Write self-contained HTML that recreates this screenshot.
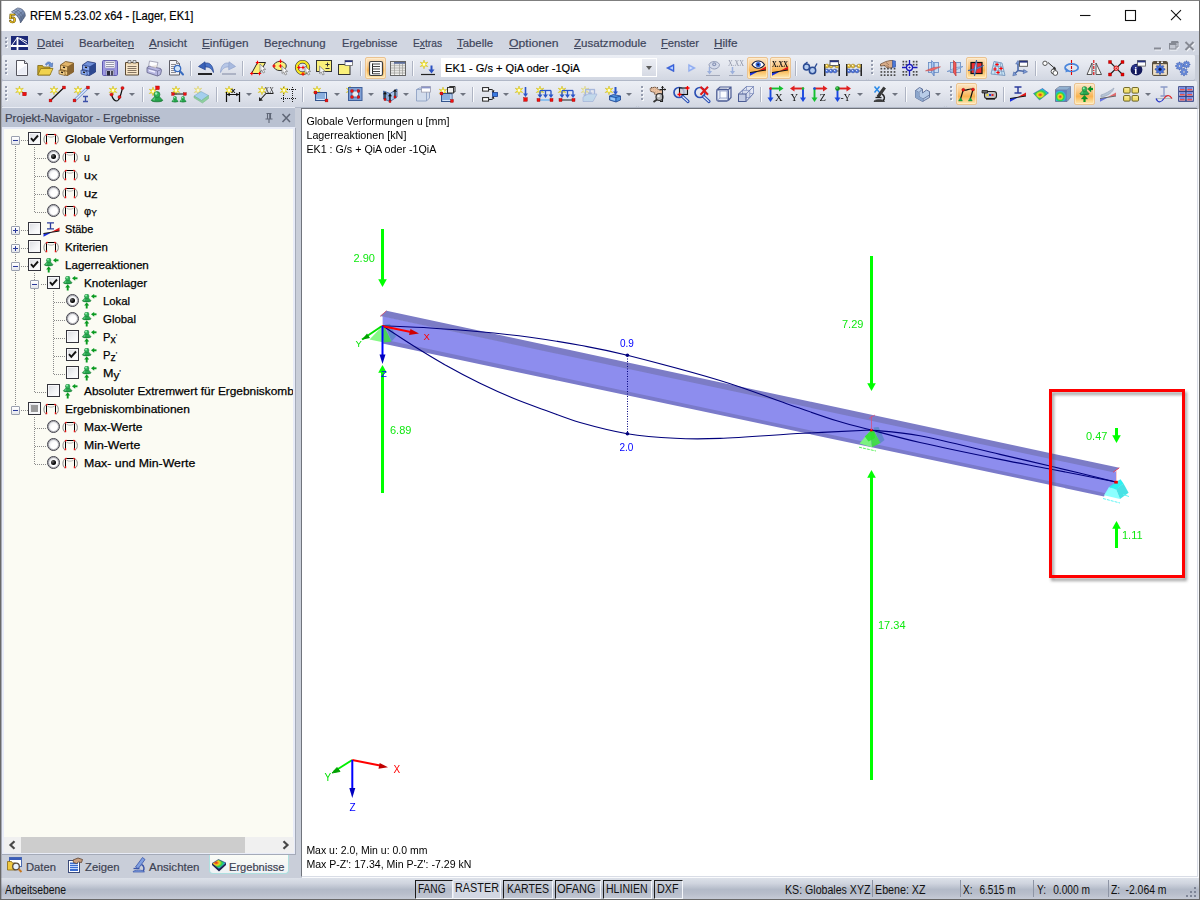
<!DOCTYPE html>
<html lang="de">
<head>
<meta charset="utf-8">
<title>RFEM 5.23.02 x64 - [Lager, EK1]</title>
<style>
*{box-sizing:border-box;margin:0;padding:0}
html,body{width:1200px;height:900px;overflow:hidden;background:#fff}
body{position:relative;font-family:"Liberation Sans",sans-serif;font-size:12px;color:#000}
.abs{position:absolute}
#win{position:absolute;left:0;top:0;width:1200px;height:900px;background:#c9ced9;overflow:hidden}
#frame{position:absolute;left:0;top:0;width:1200px;height:900px;border:1px solid #686868;border-top-color:#7f7f7f;z-index:50;pointer-events:none;box-shadow:inset 1px 0 0 rgba(80,80,88,.28)}
#title{position:absolute;left:1px;top:1px;width:1198px;height:30px;background:#fff}
.sx{display:inline-block;transform-origin:0 50%;white-space:nowrap}
#title .t{-webkit-text-stroke:.2px #000;position:absolute;left:29px;top:7.800px;font-size:12.200px;color:#000}
#menu{position:absolute;left:1px;top:31px;width:1198px;height:24px;background:#d1d6e1}
#menu span{-webkit-text-stroke:.2px #3e455b;position:absolute;top:5px;font-size:11.800px;color:#3e455b;white-space:nowrap;transform-origin:0 50%}
#menu u{text-decoration:underline;text-underline-offset:.5px;text-decoration-thickness:1px}
.tb{position:absolute;border-radius:2px;background:linear-gradient(#eceff5 0%,#e4e7ef 40%,#d2d7e2 100%);box-shadow:0 1px 0 #b1b8c7}
.grip{position:absolute;width:3px;height:16px}
.grip::after{content:"";position:absolute;left:1px;top:1px;width:2px;height:15px;background:repeating-linear-gradient(#f6f8fb 0 2px,transparent 2px 4px)}
.grip::before{content:"";position:absolute;left:0;top:0;width:2px;height:15px;background:repeating-linear-gradient(#949bad 0 2px,transparent 2px 4px);z-index:1}
.sep{position:absolute;width:2px;height:15px;border-left:1px solid #aeb4c3;border-right:1px solid #fafbfd}
.dd{position:absolute;width:0;height:0;border-left:3px solid transparent;border-right:3px solid transparent;border-top:3px solid #6f7480}
.hot{position:absolute;height:22px;border:1px solid #eac391;border-radius:2px;background:linear-gradient(#fce6c6 0%,#fbcb8c 35%,#f9b350 62%,#fcd68c 85%,#fee9b8 100%);box-shadow:inset 0 0 0 1px rgba(255,240,210,.55)}
.ic{position:absolute;width:16px;height:16px;overflow:visible;will-change:transform}
#phead{position:absolute;left:2px;top:107px;width:293px;height:21px;background:#b9c1d1;border-top:1px solid #e9ecf4}
#phead .t{-webkit-text-stroke:.2px #3d4252;position:absolute;left:3px;top:2.500px;font-size:11.800px;color:#3d4252;white-space:nowrap;transform-origin:0 50%}
#tree{position:absolute;left:2px;top:127px;width:293px;height:727px;background:#fbfbf3;border:2px solid #e8ecf8;border-bottom:0;overflow:hidden}
#titems{position:absolute;left:0;top:0;width:293px;height:860px;overflow:hidden}
#titems .tx{-webkit-text-stroke:.25px #000;position:absolute;font-size:11.800px;white-space:nowrap;transform-origin:0 50%;transform:scaleX(.93);line-height:14px}
#titems .tx em{font-style:normal;font-size:11px;position:relative;top:1.500px}
#titems .tx b{font-weight:normal;font-size:8px;position:relative;top:-2px;color:#456}
#titems .tx small{font-size:9px;position:relative;top:1px;letter-spacing:0}
#view{position:absolute;left:301px;top:108px;width:897px;height:769px;background:#fff;border:1px solid #70747c;border-right-color:#d9dde6;border-bottom-color:#d9dde6;box-shadow:1px 1px 0 #fafbfd}
#status{position:absolute;left:1px;top:878px;width:1198px;height:21px;background:linear-gradient(#dde1e9 0%,#d0d5df 25%,#b3bac8 55%,#b8becb 75%,#c6cbd6 100%)}
#status span{position:absolute;top:4.500px;font-size:12px;white-space:nowrap;color:#111;transform-origin:0 50%}
.cb{position:absolute;width:13px;height:13px;border:1px solid #34343c;background:linear-gradient(135deg,#d9dbe0,#f4f5f7 60%,#fff);box-shadow:inset 0 0 0 1px #f7f7f9}
.rb{position:absolute;width:13px;height:13px;border:1px solid #40404a;border-radius:50%;background:radial-gradient(circle at 62% 62%,#fff 35%,#cfd1d8 100%);box-shadow:inset 0 0 0 1px rgba(90,90,100,.45)}
.rb.on::after{content:"";position:absolute;left:3px;top:3px;width:5px;height:5px;border-radius:50%;background:radial-gradient(circle at 35% 35%,#666,#000 60%)}
.ex{position:absolute;width:9px;height:9px;border:1px solid #9aa0ae;border-radius:1px;background:linear-gradient(#fff,#e4e6ec)}
.ex::before{content:"";position:absolute;left:1px;top:3px;width:5px;height:1px;background:#2a3a9a}
.ex.pl::after{content:"";position:absolute;left:3px;top:1px;width:1px;height:5px;background:#2a3a9a}
.hd{position:absolute;height:1px;background:repeating-linear-gradient(90deg,#8a8a8a 0 1px,transparent 1px 2px)}
.vd{position:absolute;width:1px;background:repeating-linear-gradient(#8a8a8a 0 1px,transparent 1px 2px)}
</style>
</head>
<body>
<div id="win">
 <div id="title"><span class="t sx" style="transform:scaleX(.91)">RFEM 5.23.02 x64 - [Lager, EK1]</span>
  <svg class="abs" style="left:8px;top:6px;will-change:transform" width="17" height="17" viewBox="0 0 17 17"><defs><linearGradient id="shl" x1="0" y1="0" x2="1" y2="1"><stop offset="0" stop-color="#b4c4e0"/><stop offset=".5" stop-color="#8094ba"/><stop offset="1" stop-color="#465676"/></linearGradient></defs><path d="M2.500 4.800L8.500 1c4.500 0 8 3.500 7.800 8l-4.800 7c-.5-4-3.500-8.200-9-11.200z" fill="url(#shl)" stroke="#3c4864" stroke-width=".6"/><path d="M4.500 3.500c4.500 1.800 8 5.800 8.600 10.300M6.500 2.200c4.300 1.600 7.500 5.200 8.300 9.600M5 6.500l5.500-4M8 9l5.700-4.500M10 12.300l5.600-5.300" fill="none" stroke="#55647f" stroke-width=".6"/><text x="0" y="16.200" font-family="'Liberation Sans',sans-serif" font-weight="bold" font-size="12.500" fill="#f4c61c" stroke="#5a4500" stroke-width=".55">5</text></svg>
  <svg class="abs" style="left:1069px;top:3px" width="124" height="22" viewBox="0 0 124 22" fill="none" stroke="#111" stroke-width="1.100"><path d="M10 11.500h10.500"/><rect x="55.500" y="6.500" width="10" height="10"/><path d="M101 6.200l10 10M111 6.200L101 16.200"/></svg>
 </div>
 <div id="menu">
  <span style="left:36px;transform:scaleX(0.962)"><u>D</u>atei</span>
  <span style="left:78px;transform:scaleX(0.964)">Bearbeite<u>n</u></span>
  <span style="left:148px;transform:scaleX(0.982)"><u>A</u>nsicht</span>
  <span style="left:201px;transform:scaleX(0.998)"><u>E</u>infügen</span>
  <span style="left:263px;transform:scaleX(0.966)">Be<u>r</u>echnung</span>
  <span style="left:340.5px;transform:scaleX(0.94)">Er<u>g</u>ebnisse</span>
  <span style="left:411.5px;transform:scaleX(0.867)">E<u>x</u>tras</span>
  <span style="left:455.5px;transform:scaleX(0.963)"><u>T</u>abelle</span>
  <span style="left:508px;transform:scaleX(1.034)"><u>O</u>ptionen</span>
  <span style="left:572.5px;transform:scaleX(0.978)"><u>Z</u>usatzmodule</span>
  <span style="left:660px;transform:scaleX(0.95)"><u>F</u>enster</span>
  <span style="left:713px;transform:scaleX(0.996)"><u>H</u>ilfe</span>
  <div class="grip" style="left:4px;top:6px;height:12px;overflow:hidden"></div>
  <svg class="abs" style="left:10px;top:5px" width="17" height="14" viewBox="0 0 17 14"><rect width="17" height="14" fill="#1d2a78"/><path d="M0 10H17M6.500 1V14" stroke="#fff" stroke-width="1.800" fill="none"/><path d="M6.500 1.500L1 9M6.500 1.500L16.500 8.500M8.500 2L16 5.500" stroke="#fff" stroke-width="1" fill="none"/></svg>
  <svg class="abs" style="left:1149px;top:9px" width="48" height="14" viewBox="0 0 48 14" fill="none"><g stroke="#f4f6fa" transform="translate(.8 1)"><path d="M4 8.500H11" stroke-width="2"/><rect x="19.500" y="3.500" width="6.500" height="5.500"/><path d="M21.500 3.500V1.500H28V7H26"/><path d="M35.500 2L43.500 10M43.500 2L35.500 10" stroke-width="2"/></g><g stroke="#868a94"><path d="M4 8.500H11" stroke-width="2"/><rect x="19.500" y="3.500" width="6.500" height="5.500" fill="#c4c8d2"/><path d="M21.500 3.500V1.500H28V7H26"/><path d="M19 4.500H26.500M21 2.500H28.500" stroke-width="1"/><path d="M35.500 2L43.500 10M43.500 2L35.500 10" stroke-width="2"/></g></svg>
 </div>
 <div id="tbs">
  <div class="tb" style="left:2px;top:55px;width:1193px;height:25px"></div>
  <div class="tb" style="left:2px;top:55px;width:864.5px;height:25px"></div>
  <div class="tb" style="left:867.5px;top:55px;width:327.5px;height:25px"></div>
  <div class="grip" style="left:5px;top:60px"></div>
  <div class="grip" style="left:871px;top:60px"></div>
  <svg class="ic" style="left:15px;top:60px" viewBox="0 0 16 16"><path d="M1.500 .5h8l3 3v12h-11z" fill="#fdfdff" stroke="#55555f"/><path d="M9.500 .5v3h3" fill="#e4e6f0" stroke="#55555f"/><path d="M2.500 11l9-6v9.500h-9z" fill="#e6e9f4" opacity=".8"/></svg>
  <svg class="ic" style="left:37px;top:60px" viewBox="0 0 16 16"><path d="M.8 5.500h4.700l1 1.500h6.500V15H.8z" fill="#c8a828" stroke="#7d6610" stroke-width=".8"/><path d="M.8 15l3-6.500h12.200L13 15z" fill="#f0d24e" stroke="#8a7216" stroke-width=".8"/><path d="M8.500 4.500c1-3 4.500-3.500 6-.8l1.200-.8-.4 4.200-3.600-1.400 1.200-.8c-1-1.400-2.800-1.300-3.200.5z" fill="#6b93d6" stroke="#33589e" stroke-width=".5"/></svg>
  <svg class="ic" style="left:59px;top:60px" viewBox="0 0 16 16"><path d="M1.500 5l5-3.500 8 1.500v9l-6 3.500-7-2z" fill="#e2b56a" stroke="#6d4b1a" stroke-width=".8"/><path d="M8.500 6.500l6-3.500v9l-6 3.500z" fill="#8a6530"/><path d="M1.500 5l7 1.500v9l-7-2z" fill="#f0c880" stroke="#6d4b1a" stroke-width=".6"/><path d="M1.500 9.500l7 1.800" stroke="#6d4b1a" stroke-width=".8"/><path d="M4 7.200l2 .5M4 11.800l2 .5" stroke="#1a1208" stroke-width="1.300"/><path d="M0 10l6 1.500v4L0 14z" fill="#f3cf8a" stroke="#6d4b1a" stroke-width=".6"/><path d="M2 12.200l2 .5" stroke="#1a1208" stroke-width="1.200"/></svg>
  <svg class="ic" style="left:81px;top:60px" viewBox="0 0 16 16"><path d="M1.500 5l5-3.500 8 1.500v9l-6 3.500-7-2z" fill="#6f8fd8" stroke="#1f3272" stroke-width=".8"/><path d="M8.500 6.500l6-3.500v9l-6 3.500z" fill="#2d4890"/><path d="M1.500 5l7 1.500v9l-7-2z" fill="#86a6ec" stroke="#1f3272" stroke-width=".6"/><path d="M1.500 9.500l7 1.800" stroke="#1f3272" stroke-width=".8"/><path d="M4 7.200l2 .5M4 11.800l2 .5" stroke="#1a1208" stroke-width="1.300"/><path d="M0 10l6 1.500v4L0 14z" fill="#8fb0f2" stroke="#1f3272" stroke-width=".6"/><path d="M2 12.200l2 .5" stroke="#1a1208" stroke-width="1.200"/></svg>
  <svg class="ic" style="left:102px;top:60px" viewBox="0 0 16 16"><rect x=".5" y=".5" width="15" height="15" rx="1.200" fill="#9d99e2" stroke="#5f5bb0"/><rect x="3" y="1" width="10" height="7" fill="#f8f8fc" stroke="#8886b0" stroke-width=".5"/><path d="M4 2.500h8M4 4.500h8M4 6.500h8" stroke="#9a9aac" stroke-width="1"/><rect x="4" y="10" width="8" height="5.500" fill="#c4c4d8" stroke="#55538a" stroke-width=".5"/><rect x="5" y="11" width="3" height="4.500" fill="#2a2a3a"/><rect x="9" y="11" width="2" height="4.500" fill="#4a4a5a"/></svg>
  <svg class="ic" style="left:124px;top:60px" viewBox="0 0 16 16"><path d="M1.500 2.500h13v12.500h-13z" fill="#f8e6c8" stroke="#5b4a33"/><path d="M2 3h12v1.500h-12z" fill="#e9d0a8"/><path d="M4 .5h3v2.500H4zM9 .5h3v2.500H9z" fill="#efefef" stroke="#555" stroke-width=".7"/><path d="M3.500 6.500h9M3.500 8.500h9M3.500 10.500h9M3.500 12.500h9" stroke="#857562" stroke-width="1"/></svg>
  <svg class="ic" style="left:146px;top:60px" viewBox="0 0 16 16"><path d="M3.500 1l8.500 1.500-1.800 6L2.500 7z" fill="#fdfdff" stroke="#8a8aa0" stroke-width=".7"/><path d="M1 7.500l2.500-1.300 11 2.300 1 2-1 4-3 1.500L1 12.500z" fill="#b8b8e2" stroke="#5e5e86" stroke-width=".8"/><path d="M1 8l10.500 3v5" fill="none" stroke="#6e6e98" stroke-width=".7"/><path d="M11.500 11l4-1.500" stroke="#6e6e98" stroke-width=".7"/><path d="M3 10.300l6 1.700" stroke="#eef" stroke-width="1.300"/><path d="M3.800 6.600l6.300 1.600 1.200-3.800" fill="#e8e0d8" stroke="none" opacity=".7"/></svg>
  <svg class="ic" style="left:168px;top:60px" viewBox="0 0 16 16"><path d="M1.500 .5h7l3 3v11.500h-10z" fill="#f4f4f6" stroke="#5e5e66"/><path d="M8.500 .5v3h3" fill="#d8d8de" stroke="#5e5e66" stroke-width=".7"/><path d="M3 4.500h5M3 6.500h4M3 8.500h3M3 10.500h3M3 12.500h5" stroke="#8a8a92" stroke-width="1"/><circle cx="9.500" cy="8.500" r="3.200" fill="#cfe4fa" stroke="#3a6cc0" stroke-width="1.300"/><path d="M11.800 11l3.200 3.500" stroke="#3a6cc0" stroke-width="2" stroke-linecap="round"/></svg>
  <div class="sep" style="left:190px;top:60.5px"></div>
  <svg class="ic" style="left:198px;top:60px" viewBox="0 0 16 16"><path d="M6 3.800C10 1.500 15.200 4 15.500 12.500 13.500 8 10 6.300 6.500 7.200z" fill="#4a74c8" stroke="#1f3f8c" stroke-width=".7"/><path d="M.5 6.500L7 1.800l.3 8z" fill="#3a62b8" stroke="#1f3f8c" stroke-width=".7"/><path d="M0 14h14" stroke="#000" stroke-width="1.700"/></svg>
  <svg class="ic" style="left:220px;top:60px" viewBox="0 0 16 16"><path d="M10 3.800C6 1.500 .8 4 .5 12.500 2.500 8 6 6.300 9.500 7.200z" fill="#b6c6e6" stroke="#8fa2cc" stroke-width=".7"/><path d="M15.500 6.500L9 1.800l-.3 8z" fill="#a8badf" stroke="#8fa2cc" stroke-width=".7"/><path d="M2 14h14" stroke="#a4acbe" stroke-width="1.700"/></svg>
  <div class="sep" style="left:242px;top:60.5px"></div>
  <svg class="ic" style="left:251px;top:60px" viewBox="0 0 16 16"><path d="M6.500 2.500h8l-6 11h-8z" fill="#faf07a" stroke="#222" stroke-width="1"/><path d="M4.8 2.5h3.400M6.5 0.8v3.400" stroke="#f00" stroke-width="1.100"/><path d="M-0.8999999999999999 13.5h3.400M0.8 11.8v3.400" stroke="#f00" stroke-width="1.100"/><path d="M6.8 13.5h3.400M8.5 11.8v3.400" stroke="#f00" stroke-width="1.100"/><path d="M9 4v7.500l1.800-1.500 1.400 3 1.500-.7-1.400-2.900h2.400z" fill="#fbfbfb" stroke="#777" stroke-width=".7"/><path d="M9 4v7.500" stroke="#999" stroke-width=".6" transform="translate(1.200 1.500)" opacity=".5"/></svg>
  <svg class="ic" style="left:273px;top:60px" viewBox="0 0 16 16"><ellipse cx="7" cy="6" rx="6.300" ry="4.600" fill="#faf07a" stroke="#333" stroke-width="1"/><path d="M-0.7 6h3.400M1 4.3v3.400" stroke="#f00" stroke-width="1.100"/><path d="M5.8 1.3h3.400M7.5 -0.3999999999999999v3.400" stroke="#f00" stroke-width="1.100"/><path d="M5.8 6h3.400M7.5 4.3v3.400" stroke="#f00" stroke-width="1.100"/><path d="M9 6v7.500l1.800-1.500 1.400 3 1.500-.7-1.400-2.900h2.400z" fill="#fbfbfb" stroke="#777" stroke-width=".7"/><path d="M9 6v7.500" stroke="#999" stroke-width=".6" transform="translate(1.200 1.500)" opacity=".5"/></svg>
  <svg class="ic" style="left:295px;top:60px" viewBox="0 0 16 16"><circle cx="7.500" cy="7.500" r="5.800" fill="none" stroke="#333" stroke-width="3.600"/><circle cx="7.500" cy="7.500" r="5.800" fill="none" stroke="#f6e620" stroke-width="2.200"/><path d="M2.3 7.5h3.400M4 5.8v3.400" stroke="#f00" stroke-width="1.100"/><path d="M6.3 7.5h3.400M8 5.8v3.400" stroke="#f00" stroke-width="1.100"/><path d="M6.3 14h3.400M8 12.3v3.400" stroke="#f00" stroke-width="1.100"/><path d="M10 6v7.500l1.800-1.500 1.400 3 1.500-.7-1.400-2.900h2.400z" fill="#fbfbfb" stroke="#777" stroke-width=".7"/><path d="M10 6v7.500" stroke="#999" stroke-width=".6" transform="translate(1.200 1.500)" opacity=".5"/></svg>
  <svg class="ic" style="left:316px;top:60px" viewBox="0 0 16 16"><rect x=".5" y=".5" width="15" height="11" fill="#faf07a" stroke="#333" stroke-width="1"/><path d="M9.500 4.500h4M11.500 2.500v4M9.500 8.500h4" stroke="#333" stroke-width="1"/><path d="M3.5 6v7.500l1.800-1.500 1.400 3 1.500-.7-1.400-2.900h2.400z" fill="#fbfbfb" stroke="#777" stroke-width=".7"/><path d="M3.5 6v7.500" stroke="#999" stroke-width=".6" transform="translate(1.200 1.500)" opacity=".5"/></svg>
  <svg class="ic" style="left:338px;top:60px" viewBox="0 0 16 16"><rect x=".5" y="4.500" width="11.500" height="10" fill="#faf07a" stroke="#333" stroke-width="1"/><rect x="7" y=".5" width="7.500" height="5" fill="#fff" stroke="#666" stroke-width=".8"/><rect x="7" y=".5" width="7.500" height="1.600" fill="#26327e"/></svg>
  <div class="sep" style="left:360px;top:60.5px"></div>
  <div class="hot" style="left:365px;top:57px;width:21px"></div>
  <svg class="ic" style="left:368px;top:60px" viewBox="0 0 16 16"><rect x="1.500" y="1.500" width="13" height="14" rx="1.500" fill="#fdfdfd" stroke="#3f3f3f" stroke-width="1.200"/><path d="M4.500 3.500v10.500" stroke="#222" stroke-width="1"/><path d="M4.500 4h7.500M4.500 6.500h7.500M4.500 9h7.500M4.500 11.500h7.500M4.500 13.800h7.500" stroke="#444" stroke-width="1"/></svg>
  <svg class="ic" style="left:390px;top:60px" viewBox="0 0 16 16"><rect x=".5" y="1.500" width="15" height="14" fill="#f2f2f0" stroke="#666"/><rect x="1" y="2" width="14" height="1.800" fill="#5a6c98"/><rect x="1" y="2" width="3" height="1.800" fill="#e8e8e8"/><path d="M1 5.500h14M1 8h14M1 10.500h14M1 13h14" stroke="#c4c4c0" stroke-width="1.400"/><path d="M4.500 4v11M9.500 4v11M12.500 4v11" stroke="#9a9a96" stroke-width=".7"/></svg>
  <div class="sep" style="left:412px;top:60.5px"></div>
  <svg class="ic" style="left:420px;top:60px" viewBox="0 0 16 16"><path d="M4 0l0.85 2.93l2.96 -0.73l-2.11 2.20l2.11 2.20l-2.96 -0.73l-0.85 2.93l-0.85 -2.93l-2.96 0.73l2.11 -2.20l-2.11 -2.20l2.96 0.73z" fill="#fff030" stroke="#c4ae00" stroke-width=".45"/><circle cx="4" cy="4.4" r="1.300" fill="#ffffd8"/><path d="M11.500 5.500v5" stroke="#2a50c0" stroke-width="2"/><path d="M8.500 9.500h6l-3 4z" fill="#2a50c0"/><path d="M1 14.500h14" stroke="#222" stroke-width="1.200"/></svg>
  <svg class="ic" style="left:666px;top:60px" viewBox="0 0 16 16"><path d="M8 4.200v7.600L.5 8z" fill="#3a66e4" stroke="#2c50c0" stroke-width=".5"/><path d="M7 6.200v3.600L3.500 8z" fill="#b8d0ff"/></svg>
  <svg class="ic" style="left:688px;top:60px" viewBox="0 0 16 16"><path d="M.5 4.200v7.600L7.500 8z" fill="#8eacf4" stroke="#88a4e8" stroke-width=".4"/><path d="M1.500 6.200v3.600L4.800 8z" fill="#d0e0ff"/></svg>
  <svg class="ic" style="left:705px;top:60px" viewBox="0 0 16 16"><path d="M4 4.500c2-4 8.500-4 10.500 0 0 3-3 4.500-5.200 4.500S4 7.500 4 4.500z" fill="#d4daea" stroke="#8a94b0" stroke-width=".9"/><circle cx="9.200" cy="4.300" r="2" fill="#8a96b8"/><circle cx="9.200" cy="4.300" r=".8" fill="#e4e8f2"/><path d="M4.500 7v5" stroke="#9cb0dc" stroke-width="1.500"/><path d="M2 11h5l-2.500 3.500z" fill="#9cb0dc"/><path d="M1 15.500h14" stroke="#a2a8b8" stroke-width="1"/></svg>
  <svg class="ic" style="left:728px;top:60px" viewBox="0 0 16 16"><text x="0" y="6" font-family="'Liberation Serif',serif" font-size="7.500" fill="#8d93a6" textLength="16" lengthAdjust="spacingAndGlyphs">X.XX</text><path d="M4.500 7v5" stroke="#9cb0dc" stroke-width="1.500"/><path d="M2 11h5l-2.500 3.500z" fill="#9cb0dc"/><path d="M1 15.500h14" stroke="#a2a8b8" stroke-width="1"/></svg>
  <div class="hot" style="left:747px;top:57px;width:21px"></div>
  <svg class="ic" style="left:750px;top:60px" viewBox="0 0 16 16"><path d="M2 4.800c3-5 9.500-5 12.500 0-3 4.500-9.500 4.500-12.500 0z" fill="#fff" stroke="#10163c" stroke-width="1.100"/><circle cx="8.200" cy="4.600" r="2.600" fill="#3264d8"/><circle cx="8.200" cy="4.600" r="1.100" fill="#0a1440"/><path d="M0 12.500L8.500 11.300 0 15.800z" fill="#1a30e0"/><path d="M16 9.800V6.500L7.500 11.300z" fill="#e01818"/><path d="M0 12.500L16 10" stroke="#111" stroke-width="1"/></svg>
  <div class="hot" style="left:770px;top:57px;width:21px"></div>
  <svg class="ic" style="left:772px;top:60px" viewBox="0 0 16 16"><text x="0" y="6.500" font-family="'Liberation Serif',serif" font-weight="bold" font-size="7.500" fill="#111" textLength="16" lengthAdjust="spacingAndGlyphs">X.XX</text><path d="M0 12.500L8.500 11.300 0 15.800z" fill="#1a30e0"/><path d="M16 9.800V6.500L7.500 11.300z" fill="#e01818"/><path d="M0 12.500L16 10" stroke="#111" stroke-width="1"/></svg>
  <div class="sep" style="left:795px;top:60.5px"></div>
  <svg class="ic" style="left:802px;top:60px" viewBox="0 0 16 16"><circle cx="4.500" cy="7" r="3" fill="#b4ccf0" stroke="#2c4c94" stroke-width="1.500"/><circle cx="10.500" cy="10.500" r="3.200" fill="#b4ccf0" stroke="#2c4c94" stroke-width="1.500"/><path d="M7 8l1 .8M2.500 4.500L5.500 2M12.500 8L15 3.500" stroke="#2c4c94" stroke-width="1.400" fill="none"/></svg>
  <svg class="ic" style="left:824px;top:60px" viewBox="0 0 16 16"><path d="M.8 4v12M15.200 4v12" stroke="#111" stroke-width="1.400"/><path d="M1 6h14M1 11h14" stroke="#444" stroke-width=".8"/><circle cx="3" cy="6" r="1.900" fill="#f0cc48" stroke="#8a6d10" stroke-width=".5"/><circle cx="2.5" cy="5.4" r=".6" fill="#fff" opacity=".8"/><circle cx="7" cy="6" r="1.900" fill="#f0cc48" stroke="#8a6d10" stroke-width=".5"/><circle cx="6.5" cy="5.4" r=".6" fill="#fff" opacity=".8"/><circle cx="13" cy="6" r="1.900" fill="#f0cc48" stroke="#8a6d10" stroke-width=".5"/><circle cx="12.5" cy="5.4" r=".6" fill="#fff" opacity=".8"/><circle cx="3" cy="11" r="1.900" fill="#5a80e8" stroke="#24408e" stroke-width=".5"/><circle cx="2.5" cy="10.4" r=".6" fill="#fff" opacity=".8"/><circle cx="7" cy="11" r="1.900" fill="#5a80e8" stroke="#24408e" stroke-width=".5"/><circle cx="6.5" cy="10.4" r=".6" fill="#fff" opacity=".8"/><circle cx="11" cy="11" r="1.900" fill="#5a80e8" stroke="#24408e" stroke-width=".5"/><circle cx="10.5" cy="10.4" r=".6" fill="#fff" opacity=".8"/><rect x="6" y=".5" width="8.500" height="5" fill="#fff" stroke="#555" stroke-width=".9"/><rect x="6" y=".5" width="8.500" height="1.700" fill="#26327e"/></svg>
  <svg class="ic" style="left:846px;top:60px" viewBox="0 0 16 16"><path d="M.8 4v12M15.200 4v12" stroke="#111" stroke-width="1.400"/><path d="M1 6h14M1 11h14" stroke="#444" stroke-width=".8"/><circle cx="3" cy="6" r="1.900" fill="#f0cc48" stroke="#8a6d10" stroke-width=".5"/><circle cx="2.5" cy="5.4" r=".6" fill="#fff" opacity=".8"/><circle cx="7" cy="6" r="1.900" fill="#f0cc48" stroke="#8a6d10" stroke-width=".5"/><circle cx="6.5" cy="5.4" r=".6" fill="#fff" opacity=".8"/><circle cx="13" cy="6" r="1.900" fill="#f0cc48" stroke="#8a6d10" stroke-width=".5"/><circle cx="12.5" cy="5.4" r=".6" fill="#fff" opacity=".8"/><circle cx="3" cy="11" r="1.900" fill="#5a80e8" stroke="#24408e" stroke-width=".5"/><circle cx="2.5" cy="10.4" r=".6" fill="#fff" opacity=".8"/><circle cx="7" cy="11" r="1.900" fill="#5a80e8" stroke="#24408e" stroke-width=".5"/><circle cx="6.5" cy="10.4" r=".6" fill="#fff" opacity=".8"/><circle cx="11" cy="11" r="1.900" fill="#5a80e8" stroke="#24408e" stroke-width=".5"/><circle cx="10.5" cy="10.4" r=".6" fill="#fff" opacity=".8"/></svg>
  <svg class="ic" style="left:880px;top:60px" viewBox="0 0 16 16"><rect x="0.5" y="4.5" width="1.700" height="1.700" fill="#4a4a4a"/><rect x="0.5" y="7.8" width="1.700" height="1.700" fill="#4a4a4a"/><rect x="0.5" y="11.1" width="1.700" height="1.700" fill="#4a4a4a"/><rect x="0.5" y="14.3" width="1.700" height="1.700" fill="#4a4a4a"/><rect x="3.8" y="4.5" width="1.700" height="1.700" fill="#4a4a4a"/><rect x="3.8" y="7.8" width="1.700" height="1.700" fill="#4a4a4a"/><rect x="3.8" y="11.1" width="1.700" height="1.700" fill="#4a4a4a"/><rect x="3.8" y="14.3" width="1.700" height="1.700" fill="#4a4a4a"/><rect x="7.1" y="4.5" width="1.700" height="1.700" fill="#4a4a4a"/><rect x="7.1" y="7.8" width="1.700" height="1.700" fill="#4a4a4a"/><rect x="7.1" y="11.1" width="1.700" height="1.700" fill="#4a4a4a"/><rect x="7.1" y="14.3" width="1.700" height="1.700" fill="#4a4a4a"/><rect x="10.4" y="4.5" width="1.700" height="1.700" fill="#4a4a4a"/><rect x="10.4" y="7.8" width="1.700" height="1.700" fill="#4a4a4a"/><rect x="10.4" y="11.1" width="1.700" height="1.700" fill="#4a4a4a"/><rect x="10.4" y="14.3" width="1.700" height="1.700" fill="#4a4a4a"/><rect x="13.7" y="4.5" width="1.700" height="1.700" fill="#4a4a4a"/><rect x="13.7" y="7.8" width="1.700" height="1.700" fill="#4a4a4a"/><rect x="13.7" y="11.1" width="1.700" height="1.700" fill="#4a4a4a"/><rect x="13.7" y="14.3" width="1.700" height="1.700" fill="#4a4a4a"/><path d="M.5 4l5.500-2.500 4-1h3v6.500l-3 1-3.500-.5-1.500-2-4.500.5z" fill="#d8ac88" stroke="#6a4a34" stroke-width=".7"/><path d="M6 2.500l3 2.500M6.500 5.500l2.500 1.500" stroke="#8a6248" stroke-width=".7" fill="none"/><path d="M12.500 .5l3 .5v6l-3 .5z" fill="#4a78d8" stroke="#2a4898" stroke-width=".5"/></svg>
  <svg class="ic" style="left:902px;top:60px" viewBox="0 0 16 16"><rect x="0.5" y="0.8" width="1.700" height="1.700" fill="#4a4a4a"/><rect x="0.5" y="3.8" width="1.700" height="1.700" fill="#4a4a4a"/><rect x="0.5" y="11" width="1.700" height="1.700" fill="#4a4a4a"/><rect x="0.5" y="14" width="1.700" height="1.700" fill="#4a4a4a"/><rect x="3.5" y="0.8" width="1.700" height="1.700" fill="#4a4a4a"/><rect x="3.5" y="3.8" width="1.700" height="1.700" fill="#4a4a4a"/><rect x="3.5" y="11" width="1.700" height="1.700" fill="#4a4a4a"/><rect x="3.5" y="14" width="1.700" height="1.700" fill="#4a4a4a"/><rect x="10.8" y="0.8" width="1.700" height="1.700" fill="#4a4a4a"/><rect x="10.8" y="3.8" width="1.700" height="1.700" fill="#4a4a4a"/><rect x="10.8" y="11" width="1.700" height="1.700" fill="#4a4a4a"/><rect x="10.8" y="14" width="1.700" height="1.700" fill="#4a4a4a"/><rect x="13.8" y="0.8" width="1.700" height="1.700" fill="#4a4a4a"/><rect x="13.8" y="3.8" width="1.700" height="1.700" fill="#4a4a4a"/><rect x="13.8" y="11" width="1.700" height="1.700" fill="#4a4a4a"/><rect x="13.8" y="14" width="1.700" height="1.700" fill="#4a4a4a"/><path d="M7.500 0v16M0 7.500h15.500" stroke="#1a1ab8" stroke-width="1.300"/><circle cx="7.500" cy="7.500" r="3" fill="#fff" stroke="#1a1ab8" stroke-width="1.300"/><circle cx="7.500" cy="7.500" r="1.100" fill="#1a1ab8"/></svg>
  <svg class="ic" style="left:925px;top:60px" viewBox="0 0 16 16"><rect x="3.500" y="2.500" width="10" height="10" fill="#c4daf4" fill-opacity=".85" stroke="#6488c0" stroke-width=".8"/><path d="M6.500 .5l2.500 2.500v13l-2.500-3.500z" fill="#a8c6ee" stroke="#5a80c0" stroke-width=".7"/><path d="M.5 10.800l8-3.300 7-.7-8 3.800z" fill="#f06868" stroke="#c04848" stroke-width=".5"/><path d="M9 3v4.500M9 9.800v6" stroke="#5a80c0" stroke-width=".6"/></svg>
  <svg class="ic" style="left:947px;top:60px" viewBox="0 0 16 16"><rect x="3.500" y="2.500" width="10" height="10" fill="#c4daf4" fill-opacity=".85" stroke="#6488c0" stroke-width=".8"/><path d="M0 11.500l9-4 7-1-9 4.500z" fill="#b4cef0" stroke="#6488c0" stroke-width=".6"/><path d="M6.500 .5l2.500 2.500v13l-2.500-3.500z" fill="#f05858" stroke="#b83838" stroke-width=".7"/></svg>
  <div class="hot" style="left:966px;top:57px;width:21px"></div>
  <svg class="ic" style="left:968px;top:60px" viewBox="0 0 16 16"><rect x="3" y="2.500" width="11" height="11" fill="#f03030" stroke="#111" stroke-width="1.200"/><path d="M0 10.500c5-1 8-2.500 15.500-5-4.500 3-8 4.500-15.500 5z" fill="#c4daf4" stroke="#2c58a8" stroke-width=".8"/><path d="M8.500 0c.8 5 .2 9-2 16-.8-5-.2-9 2-16z" fill="#c4daf4" stroke="#2c58a8" stroke-width=".8"/></svg>
  <svg class="ic" style="left:990px;top:60px" viewBox="0 0 16 16"><path d="M4 1.500l8 1.500 3 12.500-14-1.500z" fill="#c8e2f4" stroke="#6a8eb8" stroke-width=".8"/><path d="M8 2.300l1.200 12.400M3 5.800l10 1.400M2 10l12 1.500M5.800 1.800L4.800 14.300M10.200 2.600l2 12.500" stroke="#6a8eb8" stroke-width=".6"/><path d="M5.3 4.5h3.400M7 2.8v3.400" stroke="#f00" stroke-width="1.100"/><path d="M3.3 9h3.400M5 7.3v3.400" stroke="#f00" stroke-width="1.100"/><path d="M9.3 8.5h3.400M11 6.8v3.400" stroke="#f00" stroke-width="1.100"/><path d="M6.3 12.5h3.400M8 10.8v3.400" stroke="#f00" stroke-width="1.100"/></svg>
  <svg class="ic" style="left:1012px;top:60px" viewBox="0 0 16 16"><path d="M6 10.500V3M6 10.500l7.500 1M6 10.500l-4 4" fill="none" stroke="#4a68a8" stroke-width="1.600"/><path d="M6 .5l-2.300 3.500h4.600zM15.500 11.800l-3.800-2.300-.5 4.200zM.8 15.800l1-4 3 3z" fill="#7d9ad4" stroke="#3a5898" stroke-width=".5"/><rect x="7.500" y=".8" width="8" height="5.500" fill="#fff" stroke="#555" stroke-width=".9"/><rect x="7.500" y=".8" width="8" height="1.800" fill="#26327e"/></svg>
  <div class="sep" style="left:1035px;top:60.5px"></div>
  <svg class="ic" style="left:1042px;top:60px" viewBox="0 0 16 16"><circle cx="3" cy="3.300" r="2.200" fill="#fff" stroke="#444" stroke-width=".9"/><circle cx="11.500" cy="11.500" r="2.400" fill="#fff" stroke="#444" stroke-width=".9"/><circle cx="13.300" cy="13" r="2.400" fill="#fff" stroke="#444" stroke-width=".9"/><path d="M6 2.500l7.500 6.500" stroke="#333" stroke-width="1"/><path d="M14.300 9.800l-3.800-.8 2.300-2.600z" fill="#333"/></svg>
  <svg class="ic" style="left:1064px;top:60px" viewBox="0 0 16 16"><ellipse cx="7.600" cy="7.700" rx="6.600" ry="3.800" fill="none" stroke="#4a86dc" stroke-width="1.700"/><path d="M1.500 12.500l.5-4.500 3.500 2.800z" fill="#4a86dc"/><path d="M7.500 0v16" stroke="#e00000" stroke-width="1.100" stroke-dasharray="3 1 1 1"/></svg>
  <svg class="ic" style="left:1086px;top:60px" viewBox="0 0 16 16"><path d="M6 3v11.500h-5z" fill="#f4f4f4" stroke="#444" stroke-width=".9"/><path d="M10 3v11.500h5.500z" fill="#f4f4f4" stroke="#444" stroke-width=".9"/><path d="M7.800 0v16" stroke="#e00000" stroke-width="1.100" stroke-dasharray="3 1 1 1"/></svg>
  <svg class="ic" style="left:1108px;top:60px" viewBox="0 0 16 16"><path d="M2 2l12.500 12.500M14.500 2L2 14.500" stroke="#222" stroke-width="1.100"/><circle cx="8.200" cy="8.200" r="2.200" fill="#f8b0b0" stroke="#d00000" stroke-width="1"/><circle cx="8.200" cy="8.200" r=".8" fill="#d00000"/><path d="M.5 .5h3v3h-3zM13 .5h3v3h-3zM.5 13h3v3h-3zM13 13h3v3h-3z" fill="#e80000" stroke="#800" stroke-width=".4"/></svg>
  <svg class="ic" style="left:1130px;top:60px" viewBox="0 0 16 16"><circle cx="6.500" cy="9.700" r="5.900" fill="#141a5c"/><circle cx="5" cy="7.500" r="2.800" fill="#3a48b0" opacity=".55"/><text x="4.200" y="13.800" font-family="'Liberation Serif',serif" font-weight="bold" font-size="10.500" fill="#fff">i</text><rect x="7.500" y=".6" width="8" height="5.500" fill="#fff" stroke="#555" stroke-width=".8"/><rect x="7.500" y=".6" width="8" height="1.800" fill="#26327e"/></svg>
  <svg class="ic" style="left:1152px;top:60px" viewBox="0 0 16 16"><rect x=".6" y="1.600" width="14.800" height="13.800" rx="1" fill="#f0e0c4" stroke="#4a4030" stroke-width="1"/><path d="M1 2h14v2.200H1z" fill="#5a5040"/><path d="M5 1.500h2v1.500H5zM9 1.500h2v1.500H9z" fill="#eee"/><path d="M12.97 8.75L12.97 9.85L11.49 10.20L11.10 11.13L11.90 12.43L11.13 13.20L9.83 12.40L8.90 12.79L8.55 14.27L7.45 14.27L7.10 12.79L6.17 12.40L4.87 13.20L4.10 12.43L4.90 11.13L4.51 10.20L3.03 9.85L3.03 8.75L4.51 8.40L4.90 7.47L4.10 6.17L4.87 5.40L6.17 6.20L7.10 5.81L7.45 4.33L8.55 4.33L8.90 5.81L9.83 6.20L11.13 5.40L11.90 6.17L11.10 7.47L11.49 8.40z" fill="#4a74dc" stroke="#1c3890" stroke-width=".5"/><circle cx="8" cy="9.3" r="1.5" fill="#10183c" stroke="#1c3890" stroke-width=".4"/></svg>
  <svg class="ic" style="left:1175px;top:60px" viewBox="0 0 16 16"><path d="M8.48 5.56L8.48 6.44L7.29 6.72L6.98 7.46L7.62 8.50L7.00 9.12L5.96 8.48L5.22 8.79L4.94 9.98L4.06 9.98L3.78 8.79L3.04 8.48L2.00 9.12L1.38 8.50L2.02 7.46L1.71 6.72L0.52 6.44L0.52 5.56L1.71 5.28L2.02 4.54L1.38 3.50L2.00 2.88L3.04 3.52L3.78 3.21L4.06 2.02L4.94 2.02L5.22 3.21L5.96 3.52L7.00 2.88L7.62 3.50L6.98 4.54L7.29 5.28z" fill="#6a8ee0" stroke="#2c4ca4" stroke-width=".5"/><circle cx="4.5" cy="6" r="1.2" fill="#dfe3ec" stroke="#2c4ca4" stroke-width=".4"/><path d="M15.08 4.10L15.08 4.90L14.01 5.15L13.73 5.82L14.31 6.75L13.75 7.31L12.82 6.73L12.15 7.01L11.90 8.08L11.10 8.08L10.85 7.01L10.18 6.73L9.25 7.31L8.69 6.75L9.27 5.82L8.99 5.15L7.92 4.90L7.92 4.10L8.99 3.85L9.27 3.18L8.69 2.25L9.25 1.69L10.18 2.27L10.85 1.99L11.10 0.92L11.90 0.92L12.15 1.99L12.82 2.27L13.75 1.69L14.31 2.25L13.73 3.18L14.01 3.85z" fill="#6a8ee0" stroke="#2c4ca4" stroke-width=".5"/><circle cx="11.5" cy="4.5" r="1.08" fill="#dfe3ec" stroke="#2c4ca4" stroke-width=".4"/><path d="M12.78 11.58L12.78 12.42L11.65 12.68L11.36 13.39L11.97 14.38L11.38 14.97L10.39 14.36L9.68 14.65L9.42 15.78L8.58 15.78L8.32 14.65L7.61 14.36L6.62 14.97L6.03 14.38L6.64 13.39L6.35 12.68L5.22 12.42L5.22 11.58L6.35 11.32L6.64 10.61L6.03 9.62L6.62 9.03L7.61 9.64L8.32 9.35L8.58 8.22L9.42 8.22L9.68 9.35L10.39 9.64L11.38 9.03L11.97 9.62L11.36 10.61L11.65 11.32z" fill="#6a8ee0" stroke="#2c4ca4" stroke-width=".5"/><circle cx="9" cy="12" r="1.14" fill="#dfe3ec" stroke="#2c4ca4" stroke-width=".4"/></svg>
  <div class="abs" style="left:441px;top:58px;width:216px;height:19px;background:#fff"><span class="sx" style="position:absolute;left:3.500px;top:3px;font-size:11.800px;-webkit-text-stroke:.2px #000;transform:scaleX(0.938)">EK1 - G/s + QiA oder -1QiA</span><div class="abs" style="left:201px;top:1px;width:14px;height:17px;background:linear-gradient(#eceef4,#d6dae4)"></div><div class="dd" style="left:204.500px;top:7.500px;border-left-width:3.500px;border-right-width:3.500px;border-top:4px solid #5c5c5c"></div></div>
  <div class="tb" style="left:2px;top:81px;width:1195px;height:26px"></div>
  <div class="tb" style="left:2px;top:81px;width:634.5px;height:26px"></div>
  <div class="tb" style="left:637.5px;top:81px;width:307px;height:26px"></div>
  <div class="tb" style="left:945.5px;top:81px;width:251.5px;height:26px"></div>
  <div class="grip" style="left:5px;top:86px"></div>
  <div class="grip" style="left:641px;top:86px"></div>
  <div class="grip" style="left:950px;top:86px"></div>
  <svg class="ic" style="left:14px;top:86px" viewBox="0 0 16 16"><path d="M5.5 0l0.85 2.93l2.96 -0.73l-2.11 2.20l2.11 2.20l-2.96 -0.73l-0.85 2.93l-0.85 -2.93l-2.96 0.73l2.11 -2.20l-2.11 -2.20l2.96 0.73z" fill="#fff030" stroke="#c4ae00" stroke-width=".45"/><circle cx="5.5" cy="4.4" r="1.300" fill="#ffffd8"/><rect x="8.7" y="6.2" width="3.6" height="3.6" fill="#f01010" stroke="#900" stroke-width=".4"/></svg>
  <div class="dd" style="left:37px;top:93px"></div>
  <svg class="ic" style="left:49px;top:86px" viewBox="0 0 16 16"><path d="M5 0l0.85 2.93l2.96 -0.73l-2.11 2.20l2.11 2.20l-2.96 -0.73l-0.85 2.93l-0.85 -2.93l-2.96 0.73l2.11 -2.20l-2.11 -2.20l2.96 0.73z" fill="#fff030" stroke="#c4ae00" stroke-width=".45"/><circle cx="5" cy="4.4" r="1.300" fill="#ffffd8"/><path d="M1.500 14.500L15 1.500" stroke="#111" stroke-width="1.200"/><rect x="0.1" y="13.1" width="2.8" height="2.8" fill="#f01010" stroke="#900" stroke-width=".4"/><rect x="13.6" y="0.1" width="2.8" height="2.8" fill="#f01010" stroke="#900" stroke-width=".4"/></svg>
  <svg class="ic" style="left:73px;top:86px" viewBox="0 0 16 16"><path d="M5 0l0.85 2.93l2.96 -0.73l-2.11 2.20l2.11 2.20l-2.96 -0.73l-0.85 2.93l-0.85 -2.93l-2.96 0.73l2.11 -2.20l-2.11 -2.20l2.96 0.73z" fill="#fff030" stroke="#c4ae00" stroke-width=".45"/><circle cx="5" cy="4.4" r="1.300" fill="#ffffd8"/><path d="M1.500 14.500L15 1.500" stroke="#6f8fd0" stroke-width="3"/><path d="M1.500 14.500L15 1.500" stroke="#dbe8fb" stroke-width="1.400"/><rect x="0.1" y="13.1" width="2.8" height="2.8" fill="#f01010" stroke="#900" stroke-width=".4"/><rect x="13.6" y="0.1" width="2.8" height="2.8" fill="#f01010" stroke="#900" stroke-width=".4"/><path d="M10 10.500h5M12.500 10.500v5M10 15.500h5" stroke="#3c50a8" stroke-width="1.300"/></svg>
  <div class="dd" style="left:94px;top:93px"></div>
  <svg class="ic" style="left:108px;top:86px" viewBox="0 0 16 16"><path d="M5 0l0.85 2.93l2.96 -0.73l-2.11 2.20l2.11 2.20l-2.96 -0.73l-0.85 2.93l-0.85 -2.93l-2.96 0.73l2.11 -2.20l-2.11 -2.20l2.96 0.73z" fill="#fff030" stroke="#c4ae00" stroke-width=".45"/><circle cx="5" cy="4.4" r="1.300" fill="#ffffd8"/><path d="M3.500 8.500c1 4 3 6.500 5.500 6.500 2.500-.5 3.500-5 5.500-13" fill="none" stroke="#111" stroke-width="1.200"/><circle cx="3.500" cy="8.500" r="1.600" fill="#f01010" stroke="#800" stroke-width=".4"/><circle cx="11.500" cy="11" r="1.600" fill="#f01010" stroke="#800" stroke-width=".4"/><circle cx="14.500" cy="2" r="1.600" fill="#f01010" stroke="#800" stroke-width=".4"/></svg>
  <div class="dd" style="left:129px;top:93px"></div>
  <div class="sep" style="left:142px;top:86.5px"></div>
  <svg class="ic" style="left:149px;top:86px" viewBox="0 0 16 16"><path d="M4 1l0.85 2.93l2.96 -0.73l-2.11 2.20l2.11 2.20l-2.96 -0.73l-0.85 2.93l-0.85 -2.93l-2.96 0.73l2.11 -2.20l-2.11 -2.20l2.96 0.73z" fill="#fff030" stroke="#c4ae00" stroke-width=".45"/><circle cx="4" cy="5.4" r="1.300" fill="#ffffd8"/><g transform="translate(8 8.5) scale(1.1)"><path d="M-1.800 1.500L-5.200 5.200c0 2 10.400 2 10.400 0L1.800 1.500z" fill="#2aa850" stroke="#14702e" stroke-width=".5"/><path d="M-5 5.300c1.500 1.100 8.500 1.100 10 0" fill="none" stroke="#14702e" stroke-width=".5"/><path d="M-1.500 2l-2.700 3 2 .6z" fill="#6cd88a" opacity=".7"/><circle cx="0" cy="0" r="2.700" fill="#2fb458" stroke="#14702e" stroke-width=".5"/><circle cx="-.8" cy="-.9" r="1.100" fill="#a0f0b4"/></g><rect x="6.7" y="0" width="3.6" height="3.6" fill="#f01010" stroke="#900" stroke-width=".4"/></svg>
  <svg class="ic" style="left:171px;top:86px" viewBox="0 0 16 16"><path d="M5 0l0.85 2.93l2.96 -0.73l-2.11 2.20l2.11 2.20l-2.96 -0.73l-0.85 2.93l-0.85 -2.93l-2.96 0.73l2.11 -2.20l-2.11 -2.20l2.96 0.73z" fill="#fff030" stroke="#c4ae00" stroke-width=".45"/><circle cx="5" cy="4.4" r="1.300" fill="#ffffd8"/><path d="M2 8h11" stroke="#111" stroke-width="1"/><rect x="0.7" y="6.7" width="2.6" height="2.6" fill="#f01010" stroke="#900" stroke-width=".4"/><rect x="12.7" y="6.7" width="2.6" height="2.6" fill="#f01010" stroke="#900" stroke-width=".4"/><g transform="translate(4 12) scale(0.62)"><path d="M-1.800 1.500L-5.200 5.200c0 2 10.400 2 10.400 0L1.800 1.500z" fill="#2aa850" stroke="#14702e" stroke-width=".5"/><path d="M-5 5.300c1.500 1.100 8.500 1.100 10 0" fill="none" stroke="#14702e" stroke-width=".5"/><path d="M-1.500 2l-2.700 3 2 .6z" fill="#6cd88a" opacity=".7"/><circle cx="0" cy="0" r="2.700" fill="#2fb458" stroke="#14702e" stroke-width=".5"/><circle cx="-.8" cy="-.9" r="1.100" fill="#a0f0b4"/></g><g transform="translate(12 12) scale(0.62)"><path d="M-1.800 1.500L-5.200 5.200c0 2 10.400 2 10.400 0L1.800 1.500z" fill="#2aa850" stroke="#14702e" stroke-width=".5"/><path d="M-5 5.300c1.500 1.100 8.500 1.100 10 0" fill="none" stroke="#14702e" stroke-width=".5"/><path d="M-1.500 2l-2.700 3 2 .6z" fill="#6cd88a" opacity=".7"/><circle cx="0" cy="0" r="2.700" fill="#2fb458" stroke="#14702e" stroke-width=".5"/><circle cx="-.8" cy="-.9" r="1.100" fill="#a0f0b4"/></g></svg>
  <svg class="ic" style="left:193px;top:86px" viewBox="0 0 16 16"><g opacity=".55"><path d="M5 0l0.85 2.93l2.96 -0.73l-2.11 2.20l2.11 2.20l-2.96 -0.73l-0.85 2.93l-0.85 -2.93l-2.96 0.73l2.11 -2.20l-2.11 -2.20l2.96 0.73z" fill="#fff030" stroke="#c4ae00" stroke-width=".45"/><circle cx="5" cy="4.4" r="1.300" fill="#ffffd8"/></g><path d="M1 10l7-4.500 7.500 4-7 5z" fill="#a4cfee" stroke="#7aa4c8" stroke-width=".6"/><path d="M1 10v1.800l8.500 5.200 6-4.500V9.500l-7 5z" fill="#8fd0a0" stroke="#70b284" stroke-width=".5"/></svg>
  <div class="sep" style="left:216px;top:86.5px"></div>
  <svg class="ic" style="left:225px;top:86px" viewBox="0 0 16 16"><path d="M4 0l0.85 2.93l2.96 -0.73l-2.11 2.20l2.11 2.20l-2.96 -0.73l-0.85 2.93l-0.85 -2.93l-2.96 0.73l2.11 -2.20l-2.11 -2.20l2.96 0.73z" fill="#fff030" stroke="#c4ae00" stroke-width=".45"/><circle cx="4" cy="4.4" r="1.300" fill="#ffffd8"/><path d="M1.500 6v10M14.500 6v10M2 8.500h12" stroke="#111" stroke-width="1.200"/><path d="M1.800 8.500l3-1.800v3.600zM14.200 8.500l-3-1.800v3.600z" fill="#111"/><text x="6" y="6.500" font-family="'Liberation Sans',sans-serif" font-weight="bold" font-size="8" fill="#111">x</text></svg>
  <div class="dd" style="left:246px;top:93px"></div>
  <svg class="ic" style="left:258px;top:86px" viewBox="0 0 16 16"><path d="M4 0l0.85 2.93l2.96 -0.73l-2.11 2.20l2.11 2.20l-2.96 -0.73l-0.85 2.93l-0.85 -2.93l-2.96 0.73l2.11 -2.20l-2.11 -2.20l2.96 0.73z" fill="#fff030" stroke="#c4ae00" stroke-width=".45"/><circle cx="4" cy="4.4" r="1.300" fill="#ffffd8"/><text x="6.500" y="6.500" font-family="'Liberation Serif',serif" font-size="7.500" fill="#333" textLength="9.500" lengthAdjust="spacingAndGlyphs">XX</text><path d="M15.500 7.500H8L1.500 14.500" fill="none" stroke="#222" stroke-width="1.100"/><path d="M1 15v-4l4 3.500z" fill="#222"/></svg>
  <svg class="ic" style="left:280px;top:86px" viewBox="0 0 16 16"><path d="M3.500 1v15M12.500 1v15M1 3.500h15M1 12.500h15" stroke="#222" stroke-width="1" stroke-dasharray="1 1"/><path d="M4 0l0.85 2.93l2.96 -0.73l-2.11 2.20l2.11 2.20l-2.96 -0.73l-0.85 2.93l-0.85 -2.93l-2.96 0.73l2.11 -2.20l-2.11 -2.20l2.96 0.73z" fill="#fff030" stroke="#c4ae00" stroke-width=".45"/><circle cx="4" cy="4.4" r="1.300" fill="#ffffd8"/></svg>
  <div class="sep" style="left:302px;top:86.5px"></div>
  <svg class="ic" style="left:312px;top:86px" viewBox="0 0 16 16"><path d="M5 0l0.85 2.93l2.96 -0.73l-2.11 2.20l2.11 2.20l-2.96 -0.73l-0.85 2.93l-0.85 -2.93l-2.96 0.73l2.11 -2.20l-2.11 -2.20l2.96 0.73z" fill="#fff030" stroke="#c4ae00" stroke-width=".45"/><circle cx="5" cy="4.4" r="1.300" fill="#ffffd8"/><rect x="3.5" y="6.5" width="11" height="8" fill="#8aaede" stroke="#34558e" stroke-width="1"/><path d="M4.5 13.5h9v-6" fill="none" stroke="#d4e4f8" stroke-width="1"/><rect x="2.1" y="5.1" width="2.8" height="2.8" fill="#f01010" stroke="#900" stroke-width=".4"/><rect x="13.1" y="13.1" width="2.8" height="2.8" fill="#f01010" stroke="#900" stroke-width=".4"/></svg>
  <div class="dd" style="left:334px;top:93px"></div>
  <svg class="ic" style="left:347px;top:86px" viewBox="0 0 16 16"><g opacity=".9"><path d="M3 0l0.85 2.93l2.96 -0.73l-2.11 2.20l2.11 2.20l-2.96 -0.73l-0.85 2.93l-0.85 -2.93l-2.96 0.73l2.11 -2.20l-2.11 -2.20l2.96 0.73z" fill="#fff030" stroke="#c4ae00" stroke-width=".45"/><circle cx="3" cy="4.4" r="1.300" fill="#ffffd8"/></g><rect x="1.500" y="1.500" width="13.500" height="13" fill="#7f9fd4" stroke="#3e5f9a"/><rect x="5" y="5" width="6.500" height="6" fill="#e9edf4" stroke="#3e5f9a" stroke-width=".8"/><rect x="3.8" y="3.8" width="2.4" height="2.4" fill="#f01010" stroke="#900" stroke-width=".4"/><rect x="10.3" y="3.8" width="2.4" height="2.4" fill="#f01010" stroke="#900" stroke-width=".4"/><rect x="3.8" y="9.8" width="2.4" height="2.4" fill="#f01010" stroke="#900" stroke-width=".4"/><rect x="10.3" y="9.8" width="2.4" height="2.4" fill="#f01010" stroke="#900" stroke-width=".4"/></svg>
  <div class="dd" style="left:368px;top:93px"></div>
  <svg class="ic" style="left:382px;top:86px" viewBox="0 0 16 16"><path d="M1.500 5l6.500 2.500v8l-6.500-2.500z" fill="#88aad8" stroke="#3e5f9a" stroke-width=".8"/><path d="M8 7.500l7-4.500v8l-7 4.500z" fill="#a8c4ea" stroke="#3e5f9a" stroke-width=".8"/><path d="M3 13v-5" stroke="#111" stroke-width="1.200"/><path d="M3 5.5l-2 2.800h4z" fill="#111"/><rect x="2" y="12.5" width="2" height="2" fill="#f01010" stroke="#900" stroke-width=".4"/><path d="M8 15v-5" stroke="#111" stroke-width="1.200"/><path d="M8 7.5l-2 2.800h4z" fill="#111"/><rect x="7" y="14.5" width="2" height="2" fill="#f01010" stroke="#900" stroke-width=".4"/><path d="M13 10.5v-5" stroke="#111" stroke-width="1.200"/><path d="M13 3l-2 2.800h4z" fill="#111"/><rect x="12" y="10" width="2" height="2" fill="#f01010" stroke="#900" stroke-width=".4"/></svg>
  <div class="dd" style="left:403px;top:93px"></div>
  <svg class="ic" style="left:415px;top:86px" viewBox="0 0 16 16"><path d="M1.500 3.500l3-1.500h10v10l-3 3h-10z" fill="#d2dcec" stroke="#8fa2c4" stroke-width=".9"/><path d="M1.500 3.500h10v11.500M11.500 3.500l3-1.500" fill="none" stroke="#8fa2c4" stroke-width=".9"/><rect x="6.500" y=".6" width="9" height="5.500" fill="#fff" stroke="#99a" stroke-width=".8"/><rect x="6.500" y=".6" width="9" height="1.800" fill="#8a94c8"/></svg>
  <svg class="ic" style="left:439px;top:86px" viewBox="0 0 16 16"><path d="M4 1l0.85 2.93l2.96 -0.73l-2.11 2.20l2.11 2.20l-2.96 -0.73l-0.85 2.93l-0.85 -2.93l-2.96 0.73l2.11 -2.20l-2.11 -2.20l2.96 0.73z" fill="#fff030" stroke="#c4ae00" stroke-width=".45"/><circle cx="4" cy="5.4" r="1.300" fill="#ffffd8"/><rect x="2.5" y="7.5" width="10.5" height="8" fill="#8aaede" stroke="#34558e" stroke-width="1"/><path d="M3.5 14.5h8.5v-6" fill="none" stroke="#d4e4f8" stroke-width="1"/><rect x="1.1" y="6.1" width="2.8" height="2.8" fill="#f01010" stroke="#900" stroke-width=".4"/><rect x="11.6" y="13.6" width="2.8" height="2.8" fill="#f01010" stroke="#900" stroke-width=".4"/><rect x="8.500" y="1.500" width="6" height="5.500" fill="#eee" stroke="#333" stroke-width="1"/><path d="M10.500 1.500V.5h5.500v5.500h-1.500" fill="none" stroke="#333" stroke-width="1"/></svg>
  <div class="dd" style="left:460px;top:93px"></div>
  <div class="sep" style="left:472px;top:86.5px"></div>
  <svg class="ic" style="left:482px;top:86px" viewBox="0 0 16 16"><rect x=".6" y="1.600" width="6" height="3.500" fill="#fff" stroke="#222" stroke-width="1"/><rect x=".6" y="11.600" width="6" height="3.500" fill="#fff" stroke="#222" stroke-width="1"/><rect x="10.500" y="6.500" width="5" height="4" fill="#3a7ae0" stroke="#1a3c90" stroke-width=".8"/><path d="M7 3.500h2c2 0 2.500 1 2.500 2.500M7 13.500h2c2 0 2.500-1 2.500-2.500" fill="none" stroke="#222" stroke-width="1"/><path d="M9.500 5l2 1.500 1-2.300zM9.500 12l2-1.500 1 2.300z" fill="#222"/></svg>
  <div class="dd" style="left:503px;top:93px"></div>
  <svg class="ic" style="left:515px;top:86px" viewBox="0 0 16 16"><path d="M4 0l0.85 2.93l2.96 -0.73l-2.11 2.20l2.11 2.20l-2.96 -0.73l-0.85 2.93l-0.85 -2.93l-2.96 0.73l2.11 -2.20l-2.11 -2.20l2.96 0.73z" fill="#fff030" stroke="#c4ae00" stroke-width=".45"/><circle cx="4" cy="4.4" r="1.300" fill="#ffffd8"/><path d="M10.5 1V8.5" stroke="#2a56c8" stroke-width="1.6"/><path d="M8 7.5h5l-2.5 3.5z" fill="#2a56c8"/><rect x="8.7" y="11.7" width="3.6" height="3.6" fill="#f01010" stroke="#900" stroke-width=".4"/></svg>
  <svg class="ic" style="left:537px;top:86px" viewBox="0 0 16 16"><path d="M3 0l0.85 2.93l2.96 -0.73l-2.11 2.20l2.11 2.20l-2.96 -0.73l-0.85 2.93l-0.85 -2.93l-2.96 0.73l2.11 -2.20l-2.11 -2.20l2.96 0.73z" fill="#fff030" stroke="#c4ae00" stroke-width=".45"/><circle cx="3" cy="4.4" r="1.300" fill="#ffffd8"/><path d="M3 4.500h11" stroke="#2a56c8" stroke-width="1.300"/><path d="M3 4.5V9.5" stroke="#2a56c8" stroke-width="1.3"/><path d="M0.5 8.5h5l-2.5 3.5z" fill="#2a56c8"/><path d="M8.5 4.5V9.5" stroke="#2a56c8" stroke-width="1.3"/><path d="M6 8.5h5l-2.5 3.5z" fill="#2a56c8"/><path d="M14 4.5V9.5" stroke="#2a56c8" stroke-width="1.3"/><path d="M11.5 8.5h5l-2.5 3.5z" fill="#2a56c8"/><path d="M1.500 14h13" stroke="#8ec0ee" stroke-width="2"/><rect x="0" y="12.5" width="3" height="3" fill="#f01010" stroke="#900" stroke-width=".4"/><rect x="13" y="12.5" width="3" height="3" fill="#f01010" stroke="#900" stroke-width=".4"/></svg>
  <svg class="ic" style="left:559px;top:86px" viewBox="0 0 16 16"><path d="M3 0l0.85 2.93l2.96 -0.73l-2.11 2.20l2.11 2.20l-2.96 -0.73l-0.85 2.93l-0.85 -2.93l-2.96 0.73l2.11 -2.20l-2.11 -2.20l2.96 0.73z" fill="#fff030" stroke="#c4ae00" stroke-width=".45"/><circle cx="3" cy="4.4" r="1.300" fill="#ffffd8"/><path d="M3 4.500h11" stroke="#2a56c8" stroke-width="1.300"/><path d="M3 4.5V9.5" stroke="#2a56c8" stroke-width="1.3"/><path d="M0.5 8.5h5l-2.5 3.5z" fill="#2a56c8"/><path d="M8.5 4.5V9.5" stroke="#2a56c8" stroke-width="1.3"/><path d="M6 8.5h5l-2.5 3.5z" fill="#2a56c8"/><path d="M14 4.5V9.5" stroke="#2a56c8" stroke-width="1.3"/><path d="M11.5 8.5h5l-2.5 3.5z" fill="#2a56c8"/><path d="M1.500 14h13" stroke="#222" stroke-width="1"/><rect x="0" y="12.5" width="3" height="3" fill="#f01010" stroke="#900" stroke-width=".4"/><rect x="13" y="12.5" width="3" height="3" fill="#f01010" stroke="#900" stroke-width=".4"/></svg>
  <svg class="ic" style="left:582px;top:86px" viewBox="0 0 16 16"><g opacity=".5"><path d="M3 0l0.85 2.93l2.96 -0.73l-2.11 2.20l2.11 2.20l-2.96 -0.73l-0.85 2.93l-0.85 -2.93l-2.96 0.73l2.11 -2.20l-2.11 -2.20l2.96 0.73z" fill="#fff030" stroke="#c4ae00" stroke-width=".45"/><circle cx="3" cy="4.4" r="1.300" fill="#ffffd8"/><path d="M3 3.500h10" stroke="#6a88c8" stroke-width="1.300"/><path d="M3.5 3.5V9.5" stroke="#6a88c8" stroke-width="1.3"/><path d="M1 8.5h5l-2.5 3.5z" fill="#6a88c8"/><path d="M8 3.5V7.5" stroke="#6a88c8" stroke-width="1.3"/><path d="M5.5 6.5h5l-2.5 3.5z" fill="#6a88c8"/><path d="M12.5 3.5V9.5" stroke="#6a88c8" stroke-width="1.3"/><path d="M10 8.5h5l-2.5 3.5z" fill="#6a88c8"/><path d="M1 11l5-3h9l-4 7.500H1z" fill="#a8d0ec" stroke="#6a88c8" stroke-width=".7"/></g></svg>
  <svg class="ic" style="left:605px;top:86px" viewBox="0 0 16 16"><path d="M4 0l0.85 2.93l2.96 -0.73l-2.11 2.20l2.11 2.20l-2.96 -0.73l-0.85 2.93l-0.85 -2.93l-2.96 0.73l2.11 -2.20l-2.11 -2.20l2.96 0.73z" fill="#fff030" stroke="#c4ae00" stroke-width=".45"/><circle cx="4" cy="4.4" r="1.300" fill="#ffffd8"/><path d="M10.5 1V6.5" stroke="#2a56c8" stroke-width="2"/><path d="M8 5.5h5l-2.5 3.5z" fill="#2a56c8"/><path d="M4.500 10l4-1.500 7 1.500v4l-4.500 2-6.500-2z" fill="#4f94e0" stroke="#1a408e" stroke-width=".8"/><path d="M4.500 10l6.500 1.500 4.500-1.500M11 11.500V16" fill="none" stroke="#1a408e" stroke-width=".7"/><path d="M5.500 11.200l4.500 1v2.600l-4.500-1.200z" fill="#9cc8f6"/></svg>
  <div class="dd" style="left:626px;top:93px"></div>
  <svg class="ic" style="left:650px;top:86px" viewBox="0 0 16 16"><rect x="1" y="1" width="1" height="1" fill="#6a5040"/><rect x="1" y="3" width="1" height="1" fill="#6a5040"/><rect x="1" y="5" width="1" height="1" fill="#6a5040"/><rect x="3" y="1" width="1" height="1" fill="#6a5040"/><rect x="3" y="3" width="1" height="1" fill="#6a5040"/><rect x="3" y="5" width="1" height="1" fill="#6a5040"/><rect x="5" y="1" width="1" height="1" fill="#6a5040"/><rect x="5" y="3" width="1" height="1" fill="#6a5040"/><rect x="5" y="5" width="1" height="1" fill="#6a5040"/><rect x="7" y="1" width="1" height="1" fill="#6a5040"/><rect x="7" y="3" width="1" height="1" fill="#6a5040"/><rect x="7" y="5" width="1" height="1" fill="#6a5040"/><path d="M0 2.500l5-1.500 5 3.500 2.500-.5v3l-4 2-4.500-1 1-1.200-4.500-1.500z" fill="#e8bc98" stroke="#6a4a34" stroke-width=".7" opacity=".9"/><circle cx="9.500" cy="11" r="3.500" fill="#b8b8b8" stroke="#333" stroke-width="1.200"/><circle cx="8.500" cy="10" r="1.300" fill="#eee"/><path d="M7 13.500l-3.500 2.500" stroke="#333" stroke-width="1.800"/><path d="M12.500 0v15.500M9.500 3.500h6.500M13 15.500h-3" stroke="#222" stroke-width="1.100" fill="none"/><path d="M11 2l1.500-2 1.500 2zM14.500 2l1.500 1.500-1.500 1.500z" fill="#222"/></svg>
  <svg class="ic" style="left:673px;top:86px" viewBox="0 0 16 16"><circle cx="6" cy="6.500" r="5" fill="none" stroke="#2c50b4" stroke-width="1.700"/><path d="M9.500 10.500l5.500 5" stroke="#2c50b4" stroke-width="3.200" stroke-linecap="round"/><path d="M9.800 10.800l5 4.600" stroke="#e6eefc" stroke-width="1.200" stroke-linecap="round"/><rect x="6.500" y="2" width="8" height="6.500" fill="#c8ccd6" fill-opacity=".8" stroke="#111" stroke-width="1.100"/><path d="M12.5 2h4M14.5 0v4" stroke="#f00" stroke-width="1.300"/><path d="M4.5 8.5h4M6.5 6.5v4" stroke="#f00" stroke-width="1.300"/></svg>
  <svg class="ic" style="left:694px;top:86px" viewBox="0 0 16 16"><circle cx="6" cy="6.500" r="5" fill="none" stroke="#2c50b4" stroke-width="1.700"/><path d="M9.500 10.500l5.500 5" stroke="#2c50b4" stroke-width="3.200" stroke-linecap="round"/><path d="M9.800 10.800l5 4.600" stroke="#e6eefc" stroke-width="1.200" stroke-linecap="round"/><path d="M6.500 .8l7.500 8M14 .8l-7.500 8" stroke="#e01818" stroke-width="2"/></svg>
  <svg class="ic" style="left:716px;top:86px" viewBox="0 0 16 16"><rect x=".8" y="3.500" width="11.500" height="11.500" rx="1.500" fill="#e6ebf6" stroke="#4c5c94" stroke-width="1.300"/><path d="M.8 4l3.200-3h11v10.500l-2.700 3M12.300 3.800l2.700-2.800" fill="none" stroke="#4c5c94" stroke-width="1.200"/><rect x="4" y="5" width="7" height="7" fill="#fafcff" stroke="#8a98c4" stroke-width=".8"/><path d="M1 4l3 1M12 4l-1 1M1 14.500l3-2.500M12 14.500l-1-2.500" stroke="#8a98c4" stroke-width=".7"/></svg>
  <svg class="ic" style="left:738px;top:86px" viewBox="0 0 16 16"><path d="M.5 8L8.500 .5h7v7L8 15.500z" fill="#dde2f0" stroke="#7f8dbc" stroke-width=".8"/><rect x="8.500" y=".5" width="7" height="7" fill="#e4e8f4" stroke="#8a98c4" stroke-width=".8"/><rect x="4.500" y="4.300" width="7.300" height="7.300" fill="#d4daec" stroke="#8a98c4" stroke-width=".8"/><rect x=".5" y="8" width="7.500" height="7.500" fill="#c4cce4" stroke="#4c5c94" stroke-width="1"/><path d="M.5 8L8.500 .5M8 8l7.500-7.500M8 15.500l7.500-8" fill="none" stroke="#6a78ac" stroke-width=".8"/></svg>
  <div class="sep" style="left:760px;top:86.5px"></div>
  <svg class="ic" style="left:768px;top:86px" viewBox="0 0 16 16"><path d="M2 2.5H12.5" stroke="#14c030" stroke-width="1.900"/><path d="M11 -0.5v6l4.5-3z" fill="#14c030"/><path d="M2.5 2V13" stroke="#1a48e0" stroke-width="1.900"/><path d="M-0.5 11.5h6l-3 4.500z" fill="#1a48e0"/><circle cx="2.500" cy="2.500" r="1.300" fill="#e02020"/><text x="7" y="15" font-family="'Liberation Serif',serif" font-size="10.5" fill="#111">X</text></svg>
  <svg class="ic" style="left:790px;top:86px" viewBox="0 0 16 16"><path d="M14 2.5H3" stroke="#e02020" stroke-width="1.900"/><path d="M4.5 -0.5v6l-4.5-3z" fill="#e02020"/><path d="M13 2V13" stroke="#1a48e0" stroke-width="1.900"/><path d="M10 11.5h6l-3 4.500z" fill="#1a48e0"/><circle cx="13" cy="2.500" r="1.300" fill="#14c030"/><text x="0.5" y="15" font-family="'Liberation Serif',serif" font-size="10.5" fill="#111">Y</text></svg>
  <svg class="ic" style="left:812px;top:86px" viewBox="0 0 16 16"><path d="M2 2.5H12.5" stroke="#e02020" stroke-width="1.900"/><path d="M11 -0.5v6l4.5-3z" fill="#e02020"/><path d="M2.5 2V13" stroke="#14c030" stroke-width="1.900"/><path d="M-0.5 11.5h6l-3 4.500z" fill="#14c030"/><circle cx="2.500" cy="2.500" r="1.300" fill="#1a48e0"/><text x="7.5" y="15" font-family="'Liberation Serif',serif" font-size="10.5" fill="#111">Z</text></svg>
  <svg class="ic" style="left:835px;top:86px" viewBox="0 0 16 16"><path d="M2 2.5H13" stroke="#e02020" stroke-width="1.900"/><path d="M11.5 -0.5v6l4.5-3z" fill="#e02020"/><path d="M2.5 2V13" stroke="#1a48e0" stroke-width="1.900"/><path d="M-0.5 11.5h6l-3 4.500z" fill="#1a48e0"/><circle cx="2.500" cy="2.500" r="2.300" fill="#109020"/><circle cx="2" cy="2" r=".9" fill="#60e070"/><text x="5.5" y="15" font-family="'Liberation Serif',serif" font-size="9.5" fill="#111">-Y</text></svg>
  <div class="dd" style="left:857px;top:93px"></div>
  <svg class="ic" style="left:871px;top:86px" viewBox="0 0 16 16"><path d="M3.500 .5l5 6M8.500 .5l-5 6" stroke="#2a8ae8" stroke-width="1.500"/><path d="M12.500 1l2 1.500-6.500 9-2-1.500z" fill="#3a3a3a" stroke="#111" stroke-width=".6"/><path d="M11 8c3 1.500 3 5.500 1 6.500" fill="none" stroke="#222" stroke-width="1.500"/><path d="M3 15.500c0-2.500 10-2.500 10.500 0z" fill="#444" stroke="#111" stroke-width=".6"/><path d="M4.500 11.500h6" stroke="#222" stroke-width="1.300"/></svg>
  <div class="dd" style="left:892px;top:93px"></div>
  <div class="sep" style="left:905px;top:86.5px"></div>
  <svg class="ic" style="left:914px;top:86px" viewBox="0 0 16 16"><path d="M1.500 4.500l4-3 3 1.500v4l4-3 3 1.500v6l-7 4-7-4z" fill="#b8cce8" stroke="#5a6c94" stroke-width=".9"/><path d="M1.500 4.500l3.500 2v4l4 2.500 6.500-4M5 6.500l3.500-3.500M9 13v2.500" fill="none" stroke="#5a6c94" stroke-width=".8"/><path d="M1.500 4.500l3.500 2v4l4 2.500v2.500l-7.500-4z" fill="#8ca6cc"/></svg>
  <div class="dd" style="left:935px;top:93px"></div>
  <div class="hot" style="left:956px;top:83px;width:21px"></div>
  <svg class="ic" style="left:958px;top:86px" viewBox="0 0 16 16"><path d="M2.500 13L5.300 3.800C8 5.500 11.500 1.500 15 3.500L12.300 13" fill="none" stroke="#111" stroke-width="1.200"/><circle cx="5.300" cy="3.800" r="1.500" fill="#f01010" stroke="#800" stroke-width=".4"/><circle cx="15" cy="3.500" r="1.500" fill="#f01010" stroke="#800" stroke-width=".4"/><path d="M2.500 11.500l2 3.500h-4zM12.300 11.500l2 3.500h-4z" fill="#18b030" stroke="#075" stroke-width=".4"/></svg>
  <svg class="ic" style="left:981px;top:86px" viewBox="0 0 16 16"><rect x="3.500" y="5.500" width="12" height="7" rx="2.500" fill="#c0c0c0" stroke="#222" stroke-width="1.100"/><path d="M1 4.500h5.500v2.500H1z" fill="#666" stroke="#111" stroke-width=".7"/><rect x="5.500" y="8" width="2" height="2" fill="#e8d820"/><rect x="8" y="8" width="2" height="2" fill="#2040e0"/><rect x="10.500" y="8" width="2" height="2" fill="#e02020"/><path d="M5 13h9" stroke="#111" stroke-width="1.300"/></svg>
  <div class="sep" style="left:1003px;top:86.5px"></div>
  <svg class="ic" style="left:1010px;top:86px" viewBox="0 0 16 16"><path d="M4.500 1h7M8 1v6M4.500 7h7" stroke="#2c3c9c" stroke-width="1.500" fill="none"/><path d="M0 12.500L8.500 11.300 0 15.800z" fill="#1a30e0"/><path d="M16 9.800V6.500L7.500 11.300z" fill="#e01818"/><path d="M0 12.500L16 10" stroke="#111" stroke-width="1"/></svg>
  <svg class="ic" style="left:1033px;top:86px" viewBox="0 0 16 16"><defs><radialGradient id="rg1" cx=".45" cy=".55" r=".6"><stop offset="0" stop-color="#e82020"/><stop offset=".3" stop-color="#f0e020"/><stop offset=".55" stop-color="#30d040"/><stop offset=".8" stop-color="#20c0e0"/><stop offset="1" stop-color="#2040d0"/></radialGradient></defs><path d="M.5 7.500l9-5 6 4.500-9 7z" fill="url(#rg1)" stroke="#3050a0" stroke-width=".5"/></svg>
  <svg class="ic" style="left:1055px;top:86px" viewBox="0 0 16 16"><defs><radialGradient id="rg2" cx=".4" cy=".6" r=".55"><stop offset="0" stop-color="#e82020"/><stop offset=".35" stop-color="#f0e020"/><stop offset=".6" stop-color="#30d040"/><stop offset=".85" stop-color="#20c0e0"/><stop offset="1" stop-color="#6080c0"/></radialGradient></defs><path d="M.5 3.500l4-3h11v11l-3.500 4h-11.500z" fill="#7a88a8" stroke="#556" stroke-width=".6"/><rect x=".8" y="3.800" width="11" height="11.500" fill="url(#rg2)"/><path d="M12 4l3.500-3.500v11l-3.500 4z" fill="#7898c0"/><path d="M.5 3.500l4-3h11l-3.500 3z" fill="#90b0d0"/></svg>
  <div class="hot" style="left:1074px;top:83px;width:21px"></div>
  <svg class="ic" style="left:1077px;top:86px" viewBox="0 0 16 16"><g transform="translate(7.5 3) scale(0.9)"><path d="M-1.800 1.500L-5.200 5.200c0 2 10.400 2 10.400 0L1.800 1.500z" fill="#2aa850" stroke="#14702e" stroke-width=".5"/><path d="M-5 5.300c1.500 1.100 8.500 1.100 10 0" fill="none" stroke="#14702e" stroke-width=".5"/><path d="M-1.500 2l-2.700 3 2 .6z" fill="#6cd88a" opacity=".7"/><circle cx="0" cy="0" r="2.700" fill="#2fb458" stroke="#14702e" stroke-width=".5"/><circle cx="-.8" cy="-.9" r="1.100" fill="#a0f0b4"/></g><path d="M7.500 16v-3.500" stroke="#0a9a20" stroke-width="2.200"/><path d="M7.500 9.300l-3.300 3.700h6.600z" fill="#0a9a20" stroke="#064" stroke-width=".3"/><path d="M16 3h-2.500" stroke="#0a9a20" stroke-width="2.200"/><path d="M10.500 3l3.500-3v6z" fill="#0a9a20" stroke="#064" stroke-width=".3"/></svg>
  <svg class="ic" style="left:1100px;top:86px" viewBox="0 0 16 16"><g opacity=".6"><path d="M1 9c4-1 9-4 13-7-1 4-6 8-13 9z" fill="#9ab0c8" stroke="#6c7c98" stroke-width=".7"/><path d="M0 12.500L8.500 11.300 0 15.800z" fill="#1a30e0"/><path d="M16 9.800V6.500L7.500 11.300z" fill="#e01818"/><path d="M0 12.500L16 10" stroke="#111" stroke-width="1"/></g></svg>
  <svg class="ic" style="left:1123px;top:86px" viewBox="0 0 16 16"><rect x="0.6" y="1.6" width="6.500" height="5.500" rx="1" fill="#f2e070" stroke="#5a5210" stroke-width=".9"/><path d="M1.6 2.9h4.500" stroke="#fff8c0" stroke-width=".8"/><rect x="9" y="1.6" width="6.500" height="5.500" rx="1" fill="#f2e070" stroke="#5a5210" stroke-width=".9"/><path d="M10 2.9h4.500" stroke="#fff8c0" stroke-width=".8"/><rect x="0.6" y="9.6" width="6.500" height="5.500" rx="1" fill="#f2e070" stroke="#5a5210" stroke-width=".9"/><path d="M1.6 10.9h4.500" stroke="#fff8c0" stroke-width=".8"/><rect x="9" y="9.6" width="6.500" height="5.500" rx="1" fill="#f2e070" stroke="#5a5210" stroke-width=".9"/><path d="M10 10.9h4.500" stroke="#fff8c0" stroke-width=".8"/></svg>
  <div class="dd" style="left:1144.5px;top:93px"></div>
  <svg class="ic" style="left:1156px;top:86px" viewBox="0 0 16 16"><path d="M4.500 1h7M8 1v9M4.500 10h7" stroke="#8a9ac8" stroke-width="1.300" fill="none"/><path d="M0 12.500h16" stroke="#9aa" stroke-width=".7"/><path d="M0 12.500c2 4.500 5 4.500 8 0" fill="none" stroke="#2a38c8" stroke-width="1.200"/><path d="M8 12.500c2.500-4 5.500-4 8 0" fill="none" stroke="#e02020" stroke-width="1.200"/></svg>
  <svg class="ic" style="left:1178px;top:86px" viewBox="0 0 16 16"><rect x=".4" y=".4" width="15.200" height="15.200" fill="#26347e"/><rect x="0.8" y="0.8" width="7" height="4.300" fill="#e8eefc" stroke="#26347e" stroke-width=".8"/><path d="M1.8 2.1h5" stroke="#2a4ad8" stroke-width="1.100"/><path d="M1.8 3.8h5" stroke="#e02020" stroke-width="1.100"/><rect x="0.8" y="5.8" width="7" height="4.300" fill="#e8eefc" stroke="#26347e" stroke-width=".8"/><path d="M1.8 7.1h5" stroke="#2a4ad8" stroke-width="1.100"/><path d="M1.8 8.8h5" stroke="#e02020" stroke-width="1.100"/><rect x="0.8" y="10.8" width="7" height="4.300" fill="#e8eefc" stroke="#26347e" stroke-width=".8"/><path d="M1.8 12.1h5" stroke="#2a4ad8" stroke-width="1.100"/><path d="M1.8 13.8h5" stroke="#e02020" stroke-width="1.100"/><rect x="8.2" y="0.8" width="7" height="4.300" fill="#e8eefc" stroke="#26347e" stroke-width=".8"/><path d="M9.2 2.1h5" stroke="#2a4ad8" stroke-width="1.100"/><path d="M9.2 3.8h5" stroke="#e02020" stroke-width="1.100"/><rect x="8.2" y="5.8" width="7" height="4.300" fill="#e8eefc" stroke="#26347e" stroke-width=".8"/><path d="M9.2 7.1h5" stroke="#2a4ad8" stroke-width="1.100"/><path d="M9.2 8.8h5" stroke="#e02020" stroke-width="1.100"/><rect x="8.2" y="10.8" width="7" height="4.300" fill="#e8eefc" stroke="#26347e" stroke-width=".8"/><path d="M9.2 12.1h5" stroke="#2a4ad8" stroke-width="1.100"/><path d="M9.2 13.8h5" stroke="#e02020" stroke-width="1.100"/></svg>
 </div>
 <div id="phead"><span class="t" style="transform:scaleX(0.965)">Projekt-Navigator - Ergebnisse</span><svg class="abs" style="left:259px;top:3px" width="32" height="14" viewBox="0 0 32 14" fill="none" stroke="#5f6676"><path d="M5.500 2.500h5M6.500 2.500v5M9.500 2.500v5.500M4.500 8h7M8 8v4" stroke-width="1.100"/><path d="M9 3v5" stroke-width="1.600"/><path d="M21.500 3l7.500 8M29 3l-7.500 8" stroke-width="1.500"/></svg></div>
 <div id="tree"></div>
 <div class="abs" style="left:4px;top:129px;width:289.500px;height:708px;overflow:hidden"><div class="abs" id="titems" style="left:-4px;top:-129px">
<div class="vd" style="left:15px;top:146px;height:260px"></div><div class="vd" style="left:34px;top:147px;height:66px"></div><div class="vd" style="left:34px;top:273px;height:120px"></div><div class="vd" style="left:34px;top:417px;height:48px"></div><div class="vd" style="left:53px;top:291px;height:84px"></div><div class="hd" style="left:21px;top:140px;width:7px"></div><div class="hd" style="left:35px;top:158px;width:11px"></div><div class="hd" style="left:35px;top:176px;width:11px"></div><div class="hd" style="left:35px;top:194px;width:11px"></div><div class="hd" style="left:35px;top:212px;width:11px"></div><div class="hd" style="left:21px;top:230px;width:7px"></div><div class="hd" style="left:21px;top:248px;width:7px"></div><div class="hd" style="left:21px;top:266px;width:7px"></div><div class="hd" style="left:41px;top:284px;width:5px"></div><div class="hd" style="left:54px;top:302px;width:11px"></div><div class="hd" style="left:54px;top:320px;width:11px"></div><div class="hd" style="left:54px;top:338px;width:11px"></div><div class="hd" style="left:54px;top:356px;width:11px"></div><div class="hd" style="left:54px;top:374px;width:11px"></div><div class="hd" style="left:35px;top:392px;width:11px"></div><div class="hd" style="left:21px;top:410px;width:7px"></div><div class="hd" style="left:35px;top:428px;width:11px"></div><div class="hd" style="left:35px;top:446px;width:11px"></div><div class="hd" style="left:35px;top:464px;width:11px"></div>
<div class="ex" style="left:11px;top:136px"></div><div class="cb" style="left:28px;top:132px"><svg class="abs" style="left:0;top:0" width="11" height="11" viewBox="0 0 11 11"><path d="M2 5.200l2.300 2.600L9 2.500" fill="none" stroke="#111" stroke-width="1.900"/></svg></div><svg class="abs" style="left:43px;top:132px" width="17" height="15" viewBox="0 0 17 15"><g transform="translate(.5 0)"><path d="M3 2.500C-.3 4 -.3 10.500 2.500 12.200M12 2.500C15.700 4 15.700 10.500 12.500 12.200" fill="none" stroke="#7c7c7c" stroke-width=".9"/><path d="M4 4.200c2 1.300 5 1.300 7 0" fill="none" stroke="#a8a8a8" stroke-width=".8"/><path d="M3 11.800V3.500Q3 2.500 4 2.500H11Q12 2.500 12 3.500V11.800" fill="none" stroke="#000" stroke-width="1"/><path d="M3 10.200v2M12 10.200v2" stroke="#f01010" stroke-width="1.400"/><path d="M2.600 3.400l1.400-1.400M12.400 3.400l-1.400-1.400" stroke="#f01010" stroke-width="1.300"/></g></svg><span class="tx" style="left:64.7px;top:132px;transform:scaleX(1.008)">Globale Verformungen</span>
<div class="rb on" style="left:47px;top:150px"></div><svg class="abs" style="left:62px;top:150px" width="17" height="15" viewBox="0 0 17 15"><g transform="translate(.5 0)"><path d="M3 2.500C-.3 4 -.3 10.500 2.500 12.200M12 2.500C15.700 4 15.700 10.500 12.500 12.200" fill="none" stroke="#7c7c7c" stroke-width=".9"/><path d="M4 4.200c2 1.300 5 1.300 7 0" fill="none" stroke="#a8a8a8" stroke-width=".8"/><path d="M3 11.800V3.500Q3 2.500 4 2.500H11Q12 2.500 12 3.500V11.800" fill="none" stroke="#000" stroke-width="1"/><path d="M3 10.200v2M12 10.200v2" stroke="#f01010" stroke-width="1.400"/><path d="M2.600 3.400l1.400-1.400M12.400 3.400l-1.400-1.400" stroke="#f01010" stroke-width="1.300"/></g></svg><span class="tx" style="left:83.7px;top:150px;transform:scaleX(0.884)">u</span>
<div class="rb" style="left:47px;top:168px"></div><svg class="abs" style="left:62px;top:168px" width="17" height="15" viewBox="0 0 17 15"><g transform="translate(.5 0)"><path d="M3 2.500C-.3 4 -.3 10.500 2.500 12.200M12 2.500C15.700 4 15.700 10.500 12.500 12.200" fill="none" stroke="#7c7c7c" stroke-width=".9"/><path d="M4 4.200c2 1.300 5 1.300 7 0" fill="none" stroke="#a8a8a8" stroke-width=".8"/><path d="M3 11.800V3.500Q3 2.500 4 2.500H11Q12 2.500 12 3.500V11.800" fill="none" stroke="#000" stroke-width="1"/><path d="M3 10.200v2M12 10.200v2" stroke="#f01010" stroke-width="1.400"/><path d="M2.600 3.400l1.400-1.400M12.400 3.400l-1.400-1.400" stroke="#f01010" stroke-width="1.300"/></g></svg><span class="tx" style="left:83.7px;top:168px;transform:scaleX(1.058)">u<small>X</small></span>
<div class="rb" style="left:47px;top:186px"></div><svg class="abs" style="left:62px;top:186px" width="17" height="15" viewBox="0 0 17 15"><g transform="translate(.5 0)"><path d="M3 2.500C-.3 4 -.3 10.500 2.500 12.200M12 2.500C15.700 4 15.700 10.500 12.500 12.200" fill="none" stroke="#7c7c7c" stroke-width=".9"/><path d="M4 4.200c2 1.300 5 1.300 7 0" fill="none" stroke="#a8a8a8" stroke-width=".8"/><path d="M3 11.800V3.500Q3 2.500 4 2.500H11Q12 2.500 12 3.500V11.800" fill="none" stroke="#000" stroke-width="1"/><path d="M3 10.200v2M12 10.200v2" stroke="#f01010" stroke-width="1.400"/><path d="M2.600 3.400l1.400-1.400M12.400 3.400l-1.400-1.400" stroke="#f01010" stroke-width="1.300"/></g></svg><span class="tx" style="left:83.7px;top:186px;transform:scaleX(1.103)">u<small>Z</small></span>
<div class="rb" style="left:47px;top:204px"></div><svg class="abs" style="left:62px;top:204px" width="17" height="15" viewBox="0 0 17 15"><g transform="translate(.5 0)"><path d="M3 2.500C-.3 4 -.3 10.500 2.500 12.200M12 2.500C15.700 4 15.700 10.500 12.500 12.200" fill="none" stroke="#7c7c7c" stroke-width=".9"/><path d="M4 4.200c2 1.300 5 1.300 7 0" fill="none" stroke="#a8a8a8" stroke-width=".8"/><path d="M3 11.800V3.500Q3 2.500 4 2.500H11Q12 2.500 12 3.500V11.800" fill="none" stroke="#000" stroke-width="1"/><path d="M3 10.200v2M12 10.200v2" stroke="#f01010" stroke-width="1.400"/><path d="M2.600 3.400l1.400-1.400M12.400 3.400l-1.400-1.400" stroke="#f01010" stroke-width="1.300"/></g></svg><span class="tx" style="left:83.7px;top:204px;transform:scaleX(0.937)">φ<small>Y</small></span>
<div class="ex pl" style="left:11px;top:226px"></div><div class="cb" style="left:28px;top:222px"></div><svg class="abs" style="left:43px;top:222px" width="17" height="15" viewBox="0 0 17 15"><g transform="translate(.5 0)"><path d="M3.500 .8h7M7 .8v6M3.500 6.800h7" stroke="#2c3c9c" stroke-width="1.300" fill="none"/><g transform="translate(0 -1)"><path d="M0 12.500L8.500 11.300 0 15.800z" fill="#1a30e0"/><path d="M16 9.800V6.500L7.500 11.300z" fill="#e01818"/><path d="M0 12.500L16 10" stroke="#111" stroke-width="1"/></g></g></svg><span class="tx" style="left:64.7px;top:222px;transform:scaleX(0.918)">Stäbe</span>
<div class="ex pl" style="left:11px;top:244px"></div><div class="cb" style="left:28px;top:240px"></div><svg class="abs" style="left:43px;top:240px" width="17" height="15" viewBox="0 0 17 15"><g transform="translate(.5 0)"><path d="M3 2.500C-.3 4 -.3 10.500 2.500 12.200M12 2.500C15.700 4 15.700 10.500 12.500 12.200" fill="none" stroke="#7c7c7c" stroke-width=".9"/><path d="M4 4.200c2 1.300 5 1.300 7 0" fill="none" stroke="#a8a8a8" stroke-width=".8"/><path d="M3 11.800V3.500Q3 2.500 4 2.500H11Q12 2.500 12 3.500V11.800" fill="none" stroke="#000" stroke-width="1"/><path d="M3 10.200v2M12 10.200v2" stroke="#f01010" stroke-width="1.400"/><path d="M2.600 3.400l1.400-1.400M12.400 3.400l-1.400-1.400" stroke="#f01010" stroke-width="1.300"/></g></svg><span class="tx" style="left:64.7px;top:240px;transform:scaleX(0.974)">Kriterien</span>
<div class="ex" style="left:11px;top:262px"></div><div class="cb" style="left:28px;top:258px"><svg class="abs" style="left:0;top:0" width="11" height="11" viewBox="0 0 11 11"><path d="M2 5.200l2.300 2.600L9 2.500" fill="none" stroke="#111" stroke-width="1.900"/></svg></div><svg class="abs" style="left:43px;top:258px" width="17" height="15" viewBox="0 0 17 15"><g transform="translate(.5 0)"><g transform="translate(5.2 2.3) scale(0.84)"><path d="M-1.800 1.500L-5.200 5.200c0 2 10.400 2 10.400 0L1.800 1.500z" fill="#2aa850" stroke="#14702e" stroke-width=".5"/><path d="M-5 5.300c1.500 1.100 8.500 1.100 10 0" fill="none" stroke="#14702e" stroke-width=".5"/><path d="M-1.500 2l-2.700 3 2 .6z" fill="#6cd88a" opacity=".7"/><circle cx="0" cy="0" r="2.700" fill="#2fb458" stroke="#14702e" stroke-width=".5"/><circle cx="-.8" cy="-.9" r="1.100" fill="#a0f0b4"/></g><path d="M5.200 14.500v-3.500" stroke="#0a9a20" stroke-width="1.900"/><path d="M5.200 8.300l-2.500 3.200h5z" fill="#0a9a20"/><path d="M15 2.300h-3" stroke="#0a9a20" stroke-width="1.900"/><path d="M9.500 2.300l3.200-2.400v4.800z" fill="#0a9a20"/></g></svg><span class="tx" style="left:64.7px;top:258px;transform:scaleX(0.983)">Lagerreaktionen</span>
<div class="ex" style="left:30px;top:280px"></div><div class="cb" style="left:47px;top:276px"><svg class="abs" style="left:0;top:0" width="11" height="11" viewBox="0 0 11 11"><path d="M2 5.200l2.300 2.600L9 2.500" fill="none" stroke="#111" stroke-width="1.900"/></svg></div><svg class="abs" style="left:62px;top:276px" width="17" height="15" viewBox="0 0 17 15"><g transform="translate(.5 0)"><g transform="translate(5.2 2.3) scale(0.84)"><path d="M-1.800 1.500L-5.200 5.200c0 2 10.400 2 10.400 0L1.800 1.500z" fill="#2aa850" stroke="#14702e" stroke-width=".5"/><path d="M-5 5.300c1.500 1.100 8.500 1.100 10 0" fill="none" stroke="#14702e" stroke-width=".5"/><path d="M-1.500 2l-2.700 3 2 .6z" fill="#6cd88a" opacity=".7"/><circle cx="0" cy="0" r="2.700" fill="#2fb458" stroke="#14702e" stroke-width=".5"/><circle cx="-.8" cy="-.9" r="1.100" fill="#a0f0b4"/></g><path d="M5.200 14.500v-3.500" stroke="#0a9a20" stroke-width="1.900"/><path d="M5.200 8.300l-2.500 3.200h5z" fill="#0a9a20"/><path d="M15 2.300h-3" stroke="#0a9a20" stroke-width="1.900"/><path d="M9.500 2.300l3.200-2.400v4.800z" fill="#0a9a20"/></g></svg><span class="tx" style="left:83.7px;top:276px;transform:scaleX(0.991)">Knotenlager</span>
<div class="rb on" style="left:66px;top:294px"></div><svg class="abs" style="left:81px;top:294px" width="17" height="15" viewBox="0 0 17 15"><g transform="translate(.5 0)"><g transform="translate(5.2 2.3) scale(0.84)"><path d="M-1.800 1.500L-5.200 5.200c0 2 10.400 2 10.400 0L1.800 1.500z" fill="#2aa850" stroke="#14702e" stroke-width=".5"/><path d="M-5 5.300c1.500 1.100 8.500 1.100 10 0" fill="none" stroke="#14702e" stroke-width=".5"/><path d="M-1.500 2l-2.700 3 2 .6z" fill="#6cd88a" opacity=".7"/><circle cx="0" cy="0" r="2.700" fill="#2fb458" stroke="#14702e" stroke-width=".5"/><circle cx="-.8" cy="-.9" r="1.100" fill="#a0f0b4"/></g><path d="M5.200 14.500v-3.500" stroke="#0a9a20" stroke-width="1.900"/><path d="M5.200 8.300l-2.500 3.200h5z" fill="#0a9a20"/><path d="M15 2.300h-3" stroke="#0a9a20" stroke-width="1.900"/><path d="M9.500 2.300l3.200-2.400v4.800z" fill="#0a9a20"/></g></svg><span class="tx" style="left:102.7px;top:294px;transform:scaleX(0.961)">Lokal</span>
<div class="rb" style="left:66px;top:312px"></div><svg class="abs" style="left:81px;top:312px" width="17" height="15" viewBox="0 0 17 15"><g transform="translate(.5 0)"><g transform="translate(5.2 2.3) scale(0.84)"><path d="M-1.800 1.500L-5.200 5.200c0 2 10.400 2 10.400 0L1.800 1.500z" fill="#2aa850" stroke="#14702e" stroke-width=".5"/><path d="M-5 5.300c1.500 1.100 8.500 1.100 10 0" fill="none" stroke="#14702e" stroke-width=".5"/><path d="M-1.500 2l-2.700 3 2 .6z" fill="#6cd88a" opacity=".7"/><circle cx="0" cy="0" r="2.700" fill="#2fb458" stroke="#14702e" stroke-width=".5"/><circle cx="-.8" cy="-.9" r="1.100" fill="#a0f0b4"/></g><path d="M5.200 14.500v-3.500" stroke="#0a9a20" stroke-width="1.900"/><path d="M5.200 8.300l-2.500 3.200h5z" fill="#0a9a20"/><path d="M15 2.300h-3" stroke="#0a9a20" stroke-width="1.900"/><path d="M9.500 2.300l3.200-2.400v4.800z" fill="#0a9a20"/></g></svg><span class="tx" style="left:102.7px;top:312px;transform:scaleX(0.968)">Global</span>
<div class="cb" style="left:66px;top:330px"></div><svg class="abs" style="left:81px;top:330px" width="17" height="15" viewBox="0 0 17 15"><g transform="translate(.5 0)"><g transform="translate(5.2 2.3) scale(0.84)"><path d="M-1.800 1.500L-5.200 5.200c0 2 10.400 2 10.400 0L1.800 1.500z" fill="#2aa850" stroke="#14702e" stroke-width=".5"/><path d="M-5 5.300c1.500 1.100 8.500 1.100 10 0" fill="none" stroke="#14702e" stroke-width=".5"/><path d="M-1.500 2l-2.700 3 2 .6z" fill="#6cd88a" opacity=".7"/><circle cx="0" cy="0" r="2.700" fill="#2fb458" stroke="#14702e" stroke-width=".5"/><circle cx="-.8" cy="-.9" r="1.100" fill="#a0f0b4"/></g><path d="M5.200 14.500v-3.500" stroke="#0a9a20" stroke-width="1.900"/><path d="M5.200 8.300l-2.500 3.200h5z" fill="#0a9a20"/><path d="M15 2.300h-3" stroke="#0a9a20" stroke-width="1.900"/><path d="M9.500 2.300l3.200-2.400v4.800z" fill="#0a9a20"/></g></svg><span class="tx" style="left:102.7px;top:330px;transform:scaleX(0.946)">P<em>x</em><b>'</b></span>
<div class="cb" style="left:66px;top:348px"><svg class="abs" style="left:0;top:0" width="11" height="11" viewBox="0 0 11 11"><path d="M2 5.200l2.300 2.600L9 2.500" fill="none" stroke="#111" stroke-width="1.900"/></svg></div><svg class="abs" style="left:81px;top:348px" width="17" height="15" viewBox="0 0 17 15"><g transform="translate(.5 0)"><g transform="translate(5.2 2.3) scale(0.84)"><path d="M-1.800 1.500L-5.200 5.200c0 2 10.400 2 10.400 0L1.800 1.500z" fill="#2aa850" stroke="#14702e" stroke-width=".5"/><path d="M-5 5.300c1.500 1.100 8.500 1.100 10 0" fill="none" stroke="#14702e" stroke-width=".5"/><path d="M-1.500 2l-2.700 3 2 .6z" fill="#6cd88a" opacity=".7"/><circle cx="0" cy="0" r="2.700" fill="#2fb458" stroke="#14702e" stroke-width=".5"/><circle cx="-.8" cy="-.9" r="1.100" fill="#a0f0b4"/></g><path d="M5.200 14.500v-3.500" stroke="#0a9a20" stroke-width="1.900"/><path d="M5.200 8.300l-2.500 3.200h5z" fill="#0a9a20"/><path d="M15 2.300h-3" stroke="#0a9a20" stroke-width="1.900"/><path d="M9.500 2.300l3.200-2.400v4.800z" fill="#0a9a20"/></g></svg><span class="tx" style="left:102.7px;top:348px;transform:scaleX(0.946)">P<em>z</em><b>'</b></span>
<div class="cb" style="left:66px;top:366px"></div><svg class="abs" style="left:81px;top:366px" width="17" height="15" viewBox="0 0 17 15"><g transform="translate(.5 0)"><g transform="translate(5.2 2.3) scale(0.84)"><path d="M-1.800 1.500L-5.200 5.200c0 2 10.400 2 10.400 0L1.800 1.500z" fill="#2aa850" stroke="#14702e" stroke-width=".5"/><path d="M-5 5.300c1.500 1.100 8.500 1.100 10 0" fill="none" stroke="#14702e" stroke-width=".5"/><path d="M-1.500 2l-2.700 3 2 .6z" fill="#6cd88a" opacity=".7"/><circle cx="0" cy="0" r="2.700" fill="#2fb458" stroke="#14702e" stroke-width=".5"/><circle cx="-.8" cy="-.9" r="1.100" fill="#a0f0b4"/></g><path d="M5.200 14.500v-3.500" stroke="#0a9a20" stroke-width="1.900"/><path d="M5.200 8.300l-2.500 3.200h5z" fill="#0a9a20"/><path d="M15 2.300h-3" stroke="#0a9a20" stroke-width="1.900"/><path d="M9.500 2.300l3.200-2.400v4.800z" fill="#0a9a20"/></g></svg><span class="tx" style="left:102.7px;top:366px;transform:scaleX(1.062)">M<em>y</em><b>'</b></span>
<div class="cb" style="left:47px;top:384px"></div><svg class="abs" style="left:62px;top:384px" width="17" height="15" viewBox="0 0 17 15"><g transform="translate(.5 0)"><g transform="translate(5.2 2.3) scale(0.84)"><path d="M-1.800 1.500L-5.200 5.200c0 2 10.400 2 10.400 0L1.800 1.500z" fill="#2aa850" stroke="#14702e" stroke-width=".5"/><path d="M-5 5.300c1.500 1.100 8.500 1.100 10 0" fill="none" stroke="#14702e" stroke-width=".5"/><path d="M-1.500 2l-2.700 3 2 .6z" fill="#6cd88a" opacity=".7"/><circle cx="0" cy="0" r="2.700" fill="#2fb458" stroke="#14702e" stroke-width=".5"/><circle cx="-.8" cy="-.9" r="1.100" fill="#a0f0b4"/></g><path d="M5.200 14.500v-3.500" stroke="#0a9a20" stroke-width="1.900"/><path d="M5.200 8.300l-2.500 3.200h5z" fill="#0a9a20"/><path d="M15 2.300h-3" stroke="#0a9a20" stroke-width="1.900"/><path d="M9.500 2.300l3.200-2.400v4.800z" fill="#0a9a20"/></g></svg><span class="tx" style="left:83.7px;top:384px;transform:scaleX(1.006)">Absoluter Extremwert für Ergebniskomb</span>
<div class="ex" style="left:11px;top:406px"></div><div class="cb" style="left:28px;top:402px"><div class="abs" style="left:2px;top:2px;width:7px;height:7px;background:#9a9a9a"></div></div><svg class="abs" style="left:43px;top:402px" width="17" height="15" viewBox="0 0 17 15"><g transform="translate(.5 0)"><path d="M3 2.500C-.3 4 -.3 10.500 2.500 12.200M12 2.500C15.700 4 15.700 10.500 12.500 12.200" fill="none" stroke="#7c7c7c" stroke-width=".9"/><path d="M4 4.200c2 1.300 5 1.300 7 0" fill="none" stroke="#a8a8a8" stroke-width=".8"/><path d="M3 11.800V3.500Q3 2.500 4 2.500H11Q12 2.500 12 3.500V11.800" fill="none" stroke="#000" stroke-width="1"/><path d="M3 10.200v2M12 10.200v2" stroke="#f01010" stroke-width="1.400"/><path d="M2.600 3.400l1.400-1.400M12.400 3.400l-1.400-1.400" stroke="#f01010" stroke-width="1.300"/></g></svg><span class="tx" style="left:64.7px;top:402px;transform:scaleX(1.013)">Ergebniskombinationen</span>
<div class="rb" style="left:47px;top:420px"></div><svg class="abs" style="left:62px;top:420px" width="17" height="15" viewBox="0 0 17 15"><g transform="translate(.5 0)"><path d="M3 2.500C-.3 4 -.3 10.500 2.500 12.200M12 2.500C15.700 4 15.700 10.500 12.500 12.200" fill="none" stroke="#7c7c7c" stroke-width=".9"/><path d="M4 4.200c2 1.300 5 1.300 7 0" fill="none" stroke="#a8a8a8" stroke-width=".8"/><path d="M3 11.800V3.500Q3 2.500 4 2.500H11Q12 2.500 12 3.500V11.800" fill="none" stroke="#000" stroke-width="1"/><path d="M3 10.200v2M12 10.200v2" stroke="#f01010" stroke-width="1.400"/><path d="M2.600 3.400l1.400-1.400M12.400 3.400l-1.400-1.400" stroke="#f01010" stroke-width="1.300"/></g></svg><span class="tx" style="left:83.7px;top:420px;transform:scaleX(1.016)">Max-Werte</span>
<div class="rb" style="left:47px;top:438px"></div><svg class="abs" style="left:62px;top:438px" width="17" height="15" viewBox="0 0 17 15"><g transform="translate(.5 0)"><path d="M3 2.500C-.3 4 -.3 10.500 2.500 12.200M12 2.500C15.700 4 15.700 10.500 12.500 12.200" fill="none" stroke="#7c7c7c" stroke-width=".9"/><path d="M4 4.200c2 1.300 5 1.300 7 0" fill="none" stroke="#a8a8a8" stroke-width=".8"/><path d="M3 11.800V3.500Q3 2.500 4 2.500H11Q12 2.500 12 3.500V11.800" fill="none" stroke="#000" stroke-width="1"/><path d="M3 10.200v2M12 10.200v2" stroke="#f01010" stroke-width="1.400"/><path d="M2.600 3.400l1.400-1.400M12.400 3.400l-1.400-1.400" stroke="#f01010" stroke-width="1.300"/></g></svg><span class="tx" style="left:83.7px;top:438px;transform:scaleX(1.039)">Min-Werte</span>
<div class="rb on" style="left:47px;top:456px"></div><svg class="abs" style="left:62px;top:456px" width="17" height="15" viewBox="0 0 17 15"><g transform="translate(.5 0)"><path d="M3 2.500C-.3 4 -.3 10.500 2.500 12.200M12 2.500C15.700 4 15.700 10.500 12.500 12.200" fill="none" stroke="#7c7c7c" stroke-width=".9"/><path d="M4 4.200c2 1.300 5 1.300 7 0" fill="none" stroke="#a8a8a8" stroke-width=".8"/><path d="M3 11.800V3.500Q3 2.500 4 2.500H11Q12 2.500 12 3.500V11.800" fill="none" stroke="#000" stroke-width="1"/><path d="M3 10.200v2M12 10.200v2" stroke="#f01010" stroke-width="1.400"/><path d="M2.600 3.400l1.400-1.400M12.400 3.400l-1.400-1.400" stroke="#f01010" stroke-width="1.300"/></g></svg><span class="tx" style="left:83.7px;top:456px;transform:scaleX(1.044)">Max- und Min-Werte</span>
 </div></div>
 <div class="abs" style="left:4px;top:837px;width:290px;height:16px;background:#f0f0f0"><div class="abs" style="left:17px;top:0;width:224px;height:16px;background:#cdcdcd"></div><svg class="abs" style="left:0;top:0" width="290" height="16" viewBox="0 0 290 16" fill="none" stroke="#484848" stroke-width="2.200"><path d="M10.500 4.200l-4 3.800 4 3.800M279.500 4.200l4 3.800-4 3.800"/></svg></div>
 <div class="abs" style="left:2px;top:853px;width:293px;height:2px;background:#e8ecf8"></div>
 <div class="abs" style="left:2px;top:854px;width:294px;height:1px;background:#a4aab8"></div><div class="abs" style="left:295px;top:128px;width:1px;height:727px;background:#a4aab8"></div>
 <div class="abs" style="left:209px;top:855px;width:80px;height:19px;background:linear-gradient(#fafbf6,#eef1f4);border:1px solid #aee0e0;border-top:0;border-radius:0 0 4px 4px"></div>
<svg class="abs" style="left:7px;top:857px" width="16" height="16" viewBox="0 0 16 16"><rect x="2.500" y=".5" width="12" height="9" fill="#fff" stroke="#4a6ab0"/><rect x="2.500" y=".5" width="12" height="2.500" fill="#3a5cb8"/><path d="M.5 4.500h4l1 1.500h3v7h-8z" fill="#f0c840" stroke="#8a6a10" stroke-width=".8"/><circle cx="9" cy="9.500" r="3.300" fill="#e8f2ff" stroke="#5a4a3a" stroke-width="1.300"/><path d="M11.500 12l3 3" stroke="#c87820" stroke-width="2"/></svg><span class="abs sx" style="left:25.5px;top:859.500px;font-size:11.800px;-webkit-text-stroke:.2px #3d4252;color:#3d4252;transform:scaleX(0.953)">Daten</span>
<svg class="abs" style="left:67px;top:857px" width="16" height="16" viewBox="0 0 16 16"><rect x="1.500" y="3.500" width="11" height="12" fill="#fff" stroke="#3a4a7a"/><rect x="3" y="5.500" width="8" height="8.500" fill="#3a6cd0"/><path d="M3 7.500h8M3 9.500h8M3 11.500h8" stroke="#cfe0ff" stroke-width=".9"/><path d="M6 3l5-2 4.500 1.500-1 3-3-.5-2 1.500-3-1z" fill="#caa080" stroke="#5a4030" stroke-width=".8"/></svg><span class="abs sx" style="left:85px;top:859.500px;font-size:11.800px;-webkit-text-stroke:.2px #3d4252;color:#3d4252;transform:scaleX(0.956)">Zeigen</span>
<svg class="abs" style="left:132px;top:857px" width="16" height="16" viewBox="0 0 16 16"><path d="M10.500 .5l2.500 2-7 9.500-2.500-2z" fill="#7f9fe0" stroke="#3a54a8" stroke-width=".8"/><path d="M9.500 7.500c3 1.500 3 5 1.500 6.500" fill="none" stroke="#3a54a8" stroke-width="1.500"/><path d="M1 15c0-2.500 11-2.500 11.500 0z" fill="#7f9fe0" stroke="#3a54a8" stroke-width=".7"/><path d="M1.500 11.500h6" stroke="#3a54a8" stroke-width="1.300"/></svg><span class="abs sx" style="left:149px;top:859.500px;font-size:11.800px;-webkit-text-stroke:.2px #3d4252;color:#3d4252;transform:scaleX(0.975)">Ansichten</span>
<svg class="abs" style="left:211px;top:857px" width="16" height="16" viewBox="0 0 16 16"><defs><radialGradient id="tg" cx=".3" cy=".35" r=".75"><stop offset="0" stop-color="#e81818"/><stop offset=".3" stop-color="#f4d820"/><stop offset=".55" stop-color="#30d048"/><stop offset=".8" stop-color="#20b8e8"/><stop offset="1" stop-color="#2030c8"/></radialGradient></defs><path d="M1 6.500l6.500-4 7.500 3.500-7 6z" fill="url(#tg)" stroke="#1a2a6a" stroke-width=".6"/><path d="M1 6.500v1.500l7 6.500 7-6.500V6l-7 6z" fill="#1a2050"/></svg><span class="abs sx" style="left:229px;top:859.500px;font-size:11.800px;-webkit-text-stroke:.2px #3d4252;color:#3d4252;transform:scaleX(0.94)">Ergebnisse</span>
 <div id="view">
<svg class="abs" style="left:0;top:0;will-change:transform" width="895" height="767" viewBox="302 109 895 767" font-family="'Liberation Sans',sans-serif" font-size="11">
<defs><filter id="sh" x="-5%" y="-5%" width="112%" height="112%"><feGaussianBlur stdDeviation="1.6"/></filter></defs>
<g fill="#000" font-size="11">
<text x="306.400" y="125" textLength="143" lengthAdjust="spacingAndGlyphs">Globale Verformungen u [mm]</text>
<text x="306.400" y="139" textLength="100" lengthAdjust="spacingAndGlyphs">Lagerreaktionen [kN]</text>
<text x="306.400" y="153" textLength="130" lengthAdjust="spacingAndGlyphs">EK1 : G/s + QiA oder -1QiA</text>
<text x="306.400" y="854" textLength="121" lengthAdjust="spacingAndGlyphs">Max u: 2.0, Min u: 0.0 mm</text>
<text x="306.400" y="868" textLength="165" lengthAdjust="spacingAndGlyphs">Max P-Z': 17.34, Min P-Z': -7.29 kN</text>
</g>
<!-- beam -->
<polygon points="382.6,316 1116,471.500 1116,483 1104.500,494.600 382.6,340.5" fill="#8d8dee"/>
<polygon points="386.5,310.8 1119.3,467.8 1113.200,472.200 380.2,316.100" fill="#7c7cc6"/>
<polygon points="382.6,339.2 1105.5,493.2 1104,496.4 382.6,343.6" fill="#7a7aca"/>
<line x1="380.2" y1="316.4" x2="386.5" y2="310.8" stroke="#d0607a" stroke-width="1"/>
<line x1="1113.200" y1="472.200" x2="1119.300" y2="467.800" stroke="#e04060" stroke-width="1"/><line x1="1116.500" y1="471" x2="1116.500" y2="481" stroke="#f8c0c0" stroke-width=".8"/>
<!-- supports -->
<g>
<polygon points="385,324.500 390,324 396,336.500 391.500,341.500" fill="#5a86c4" opacity=".8"/>
<polygon points="382,326.500 369.500,339.500 384,342.500" fill="#7cf87c" opacity=".92"/>
<polygon points="382,326.500 384,342.500 391.500,341.500 385,328" fill="#3ce03c" opacity=".85"/>
<polygon points="873.500,427.500 878.500,427 884.500,440 880,443.500" fill="#5a86c4" opacity=".85"/>
<polygon points="870,431 859.500,443.500 872,447.200" fill="#7cf87c" opacity=".95"/>
<polygon points="870,431 874,431 880.500,443 872,447.200" fill="#3ce23c" opacity=".9"/>
<polygon points="864.800,436.500 871,430.500 874.200,432 875,438 868.500,441.500" fill="#2fe02f" opacity=".9"/>
<line x1="859" y1="447.200" x2="876" y2="451" stroke="#5cf05c" stroke-dasharray="3 1"/>
<polygon points="1109,487 1104,495.300 1120,499 1116,489" fill="#86ffff" opacity=".95"/>
<polygon points="1116,489 1120,499 1128.600,492.800 1123.500,483.500" fill="#3fe0e4" opacity=".95"/>
<polygon points="1109,487 1116,482 1120.500,479.200 1123.500,483.500 1116,489.500" fill="#22f0f0" opacity=".95"/>
<line x1="1103" y1="498.500" x2="1120" y2="503" stroke="#5cf4f4" stroke-dasharray="3 1"/>
<line x1="1123" y1="494.500" x2="1129" y2="496.500" stroke="#5cf4f4"/>
</g>
<!-- deformed curves -->
<g fill="none" stroke="#00007c" stroke-width="1.1">
<path d="M382.5 325.8C390.4 326.2 413.8 327.0 430.0 328.0C446.2 329.0 463.3 330.2 480.0 331.7C496.7 333.2 513.3 334.9 530.0 337.2C546.7 339.5 563.8 342.3 580.0 345.3C596.2 348.3 604.0 349.4 627.3 355.3C650.6 361.2 693.4 372.4 720.0 380.5C746.6 388.6 767.2 397.0 786.7 403.7C806.2 410.4 822.6 416.4 836.7 420.8C850.8 425.2 865.5 428.5 871.3 430.0C879.4 432.1 898.5 437.6 920.0 442.5C941.5 447.4 978.3 455.0 1000.0 459.4C1021.7 463.8 1030.7 465.2 1050.0 469.0C1069.3 472.8 1105.0 479.8 1116.0 482.0"/>
<path d="M382.5 325.8C387.6 329.1 402.6 339.1 413.3 345.8C424.0 352.5 435.6 359.6 446.7 365.8C457.8 372.1 468.9 377.9 480.0 383.3C491.1 388.7 502.2 393.7 513.3 398.3C524.4 402.9 535.6 406.8 546.7 410.8C557.8 414.8 566.6 418.7 580.0 422.5C593.4 426.3 611.5 431.1 627.3 433.7C643.1 436.3 659.5 437.5 675.0 438.3C690.5 439.1 698.6 439.2 720.0 438.4C741.4 437.6 778.1 434.7 803.3 433.3C828.5 431.9 860.0 430.6 871.3 430.0C879.4 431.0 898.5 431.7 920.0 435.8C941.5 439.9 978.3 449.4 1000.0 454.4C1021.7 459.4 1030.7 461.4 1050.0 466.0C1069.3 470.6 1105.0 479.3 1116.0 482.0"/>
</g>
<line x1="627.500" y1="356" x2="627.500" y2="433" stroke="#00007c" stroke-width="1" stroke-dasharray="1 1.500"/>
<circle cx="627.400" cy="355.300" r="1.800" fill="#00007c"/><circle cx="627.400" cy="433.700" r="1.800" fill="#00007c"/>
<circle cx="871.300" cy="430" r="1.500" fill="#e00000"/><rect x="1114.300" y="480.800" width="3.500" height="2.800" fill="#f00000"/>
<line x1="871.500" y1="416" x2="871.500" y2="430" stroke="#d05080" stroke-width=".8"/><line x1="869" y1="418.500" x2="875" y2="415" stroke="#d05080" stroke-width=".8"/>
<g fill="#0000ff" font-size="10"><text x="620" y="347">0.9</text><text x="619.500" y="451">2.0</text></g>
<!-- reaction arrows -->
<g stroke="#00ff00" stroke-width="3" fill="#00ff00">
<line x1="382.500" y1="229" x2="382.500" y2="280"/><polygon points="378.200,279.300 386.800,279.300 382.500,287" stroke="none"/>
<line x1="382.500" y1="372" x2="382.500" y2="493"/><polygon points="378.200,372.700 386.800,372.700 382.500,365" stroke="none"/>
<line x1="871.500" y1="256" x2="871.500" y2="384"/><polygon points="867.200,383.300 875.800,383.300 871.500,391" stroke="none"/>
<line x1="871.500" y1="477" x2="871.500" y2="780"/><polygon points="867.200,477.700 875.800,477.700 871.500,470" stroke="none"/>
<line x1="1116.500" y1="428" x2="1116.500" y2="437"/><polygon points="1112.200,435.300 1120.800,435.300 1116.500,443" stroke="none"/>
<line x1="1116.500" y1="528" x2="1116.500" y2="548"/><polygon points="1112.200,528.700 1120.800,528.700 1116.500,521" stroke="none"/>
</g>
<g fill="#10e810" font-size="11"><text x="353.500" y="262">2.90</text><text x="390" y="434">6.89</text><text x="842" y="328">7.29</text><text x="878" y="629">17.34</text><text x="1086" y="440">0.47</text><text x="1122" y="539">1.11</text></g>
<!-- local axes -->
<g stroke-width="2" fill="none">
<line x1="382" y1="326" x2="362" y2="339.500" stroke="#00e000"/><polygon points="362,339.800 367,333.500 370,338" fill="#00a000" stroke="none"/>
<line x1="382" y1="326" x2="412" y2="332.200" stroke="#ff0000"/><polygon points="419,333.600 409,335 410.500,329" fill="#d00000" stroke="none"/>
<line x1="382.500" y1="326" x2="382.500" y2="356" stroke="#0000ff"/><polygon points="382.500,364 379.500,354.500 385.500,354.500" fill="#0000c0" stroke="none"/>
</g>
<g font-size="9.500"><text x="423.500" y="340.300" fill="#ff0000">X</text><text x="355.500" y="347" fill="#00e000">Y</text><text x="381" y="377" fill="#0000ff">Z</text></g>
<!-- global triad -->
<g stroke-width="2" fill="none">
<line x1="352.200" y1="760" x2="334" y2="771.500" stroke="#00f000"/><polygon points="332,773 337,767.500 340,771.500" fill="#00a000" stroke="#00a000" stroke-width="1"/>
<line x1="352.200" y1="760" x2="380" y2="765.600" stroke="#ff0000"/><polygon points="388,767.200 378.500,768.800 379.700,763" fill="#c00000" stroke="none"/>
<line x1="352.300" y1="760" x2="352.300" y2="789" stroke="#0000ff"/><polygon points="352.300,798 349.300,788 355.300,788" fill="#0000c0" stroke="none"/>
</g>
<g font-size="10"><text x="393.500" y="773" fill="#ff0000">X</text><text x="324.500" y="780.500" fill="#00e000">Y</text><text x="349.500" y="810.500" fill="#0000ff">Z</text></g>
<!-- red highlight box -->
<rect x="1052.500" y="393.500" width="133" height="186" fill="none" stroke="#555" stroke-width="3" opacity=".55" filter="url(#sh)"/>
<rect x="1050.500" y="390.500" width="133" height="186" fill="none" stroke="#ff0000" stroke-width="3"/>
</svg>
 </div>
 <div id="status">
  <span style="left:4px;transform:scaleX(0.863);font-size:12px">Arbeitsebene</span>
  <div class="abs" style="left:414px;top:2px;width:37.5px;height:19px;border:1px solid #1a1a1a;border-left-width:1.500px;border-right-color:#f4f6fa;border-bottom-color:#f4f6fa;background:rgba(190,196,208,.3)"></div>
  <span style="left:416.5px;top:4px;transform:scaleX(0.842)">FANG</span>
  <div class="abs" style="left:452px;top:2px;width:48px;height:19px;background:#d3d8e3;border:1px solid #f4f6fa;border-top-color:#e4e7ee;border-left-color:#e4e7ee"></div>
  <span style="left:454px;top:3.2px;transform:scaleX(0.904)">RASTER</span>
  <div class="abs" style="left:502px;top:2px;width:50px;height:19px;border:1px solid #1a1a1a;border-left-width:1.500px;border-right-color:#f4f6fa;border-bottom-color:#f4f6fa;background:rgba(190,196,208,.3)"></div>
  <span style="left:506px;top:4px;transform:scaleX(0.879)">KARTES</span>
  <div class="abs" style="left:553.5px;top:2px;width:46.5px;height:19px;border:1px solid #1a1a1a;border-left-width:1.500px;border-right-color:#f4f6fa;border-bottom-color:#f4f6fa;background:rgba(190,196,208,.3)"></div>
  <span style="left:555.5px;top:4px;transform:scaleX(0.917)">OFANG</span>
  <div class="abs" style="left:602px;top:2px;width:49px;height:19px;border:1px solid #1a1a1a;border-left-width:1.500px;border-right-color:#f4f6fa;border-bottom-color:#f4f6fa;background:rgba(190,196,208,.3)"></div>
  <span style="left:604.5px;top:4px;transform:scaleX(0.877)">HLINIEN</span>
  <div class="abs" style="left:653px;top:2px;width:29px;height:19px;border:1px solid #1a1a1a;border-left-width:1.500px;border-right-color:#f4f6fa;border-bottom-color:#f4f6fa;background:rgba(190,196,208,.3)"></div>
  <span style="left:655.5px;top:4px;transform:scaleX(0.896)">DXF</span>
  <span style="left:784px;transform:scaleX(0.884);font-size:12px">KS: Globales XYZ</span>
  <span style="left:873.5px;transform:scaleX(0.891);font-size:12px">Ebene: XZ</span>
  <span style="left:962px;transform:scaleX(0.832);font-size:12px">X:  6.515 m</span>
  <span style="left:1035.5px;transform:scaleX(0.849);font-size:12px">Y:  0.000 m</span>
  <span style="left:1109.5px;transform:scaleX(0.867);font-size:12px">Z: -2.064 m</span>
  <div class="abs" style="left:871px;top:2px;width:1px;height:17px;background:#8e95a5"></div>
  <div class="abs" style="left:959px;top:2px;width:1px;height:17px;background:#8e95a5"></div>
  <div class="abs" style="left:1032px;top:2px;width:1px;height:17px;background:#8e95a5"></div>
  <div class="abs" style="left:1107px;top:2px;width:1px;height:17px;background:#8e95a5"></div>
  <svg class="abs" style="left:1184px;top:8px" width="13" height="13" viewBox="0 0 13 13" fill="#7e8596"><rect x="9" y="1" width="2" height="2"/><rect x="5" y="5" width="2" height="2"/><rect x="9" y="5" width="2" height="2"/><rect x="1" y="9" width="2" height="2"/><rect x="5" y="9" width="2" height="2"/><rect x="9" y="9" width="2" height="2"/></svg>
 </div>
 <div id="frame"></div>
</div>
</body>
</html>
